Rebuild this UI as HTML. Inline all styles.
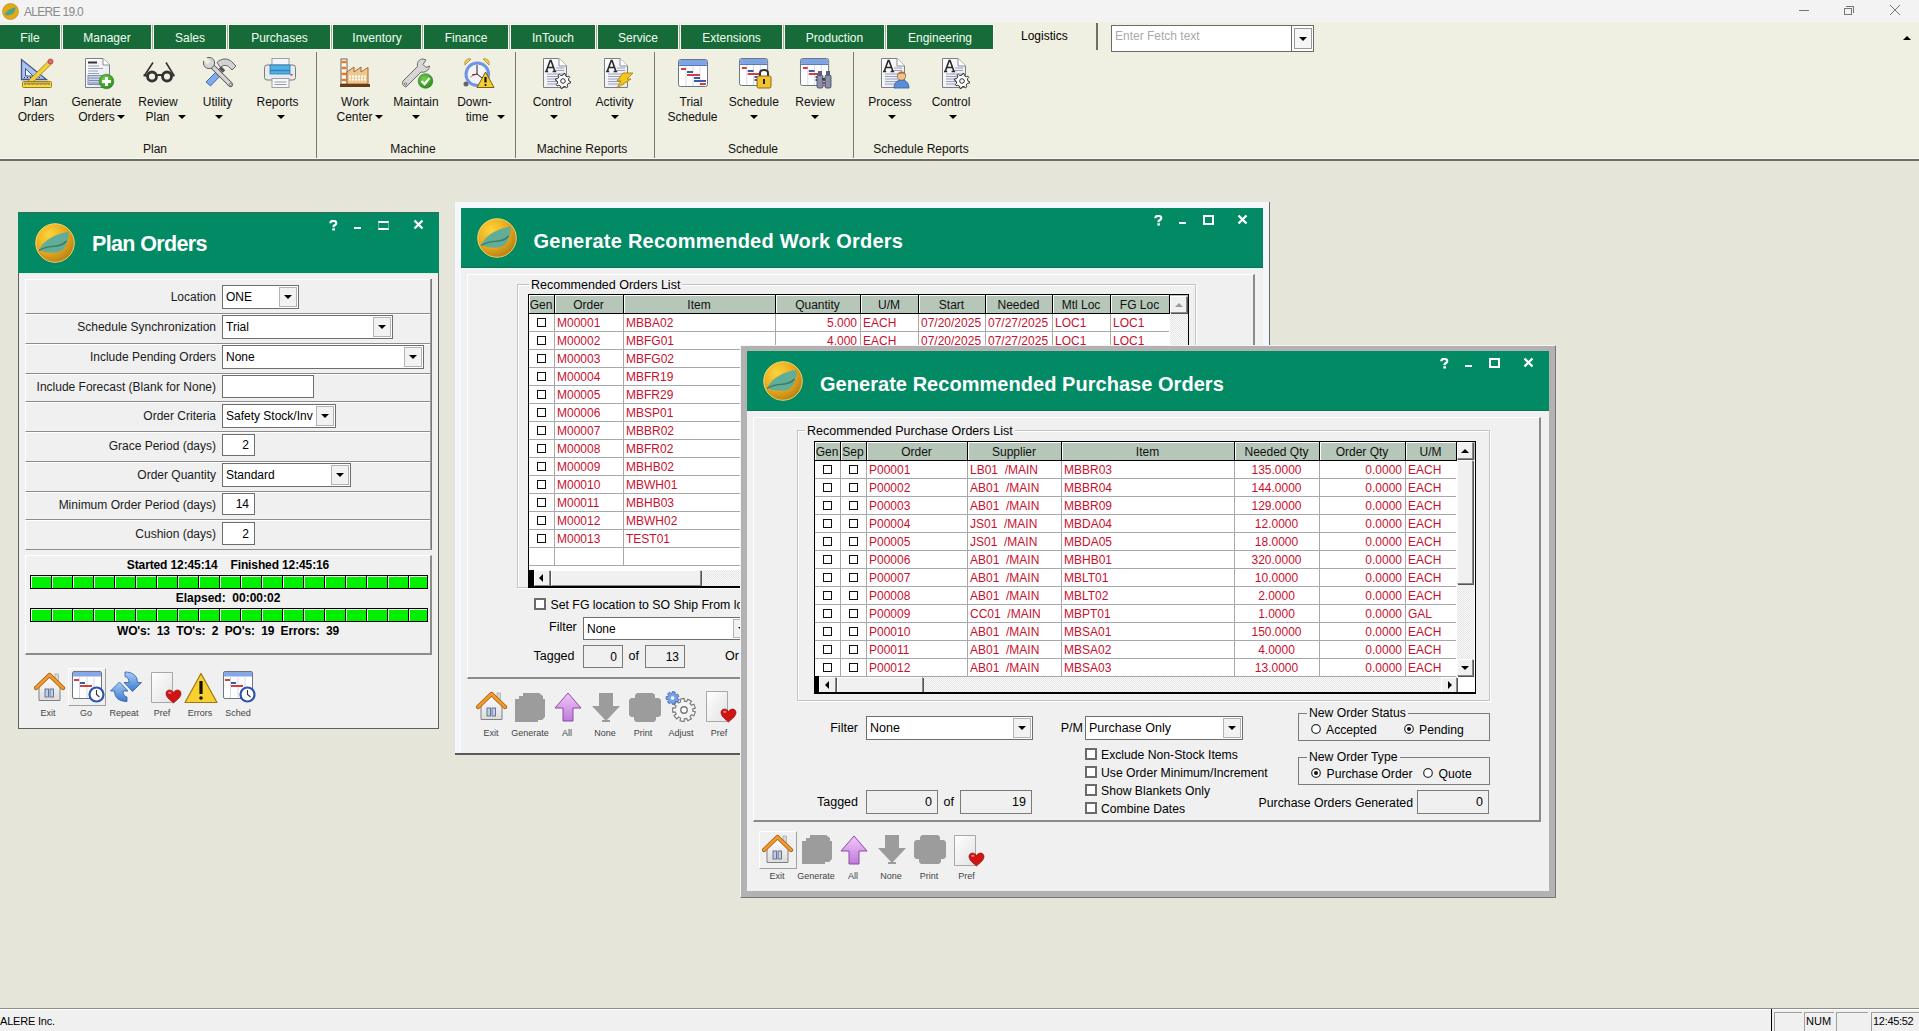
<!DOCTYPE html>
<html><head><meta charset="utf-8">
<style>
*{box-sizing:border-box}
html,body{margin:0;padding:0}
body{width:1919px;height:1031px;overflow:hidden;position:relative;background:#e6e5d9;font-family:"Liberation Sans",sans-serif;font-size:12px;color:#000}
.a{position:absolute}
.t{position:absolute;white-space:nowrap;line-height:14px}
.tab{position:absolute;top:25px;height:24px;background:#176b39;color:#eefff0;text-align:center;line-height:26px;font-size:12px;outline:1px solid #fafaf5}
.rl{position:absolute;text-align:center;white-space:nowrap;font-size:12px;line-height:15px;color:#111}
.sep{position:absolute;top:52px;width:1px;height:106px;background:#7a7a72}
.dd{display:inline-block;width:0;height:0;border-left:4px solid transparent;border-right:4px solid transparent;border-top:4px solid #000;vertical-align:middle}
</style></head><body>
<!-- title bar -->
<div class="a" style="left:0;top:0;width:1919px;height:22px;background:#f3f3f3"></div>
<svg class="a" style="left:2px;top:3px" width="17" height="17" viewBox="-8.5 -8.5 17 17"><circle r="8" fill="#e2a918" stroke="#b88a10" stroke-width="0.6"/><path d="M-6 3C-3 -2 2 -4 5 -4C5 0 2 4 -3 4Z" fill="#4fa48a"/></svg>
<div class="t" style="left:24px;top:5px;color:#8a8a8a;font-size:12px;letter-spacing:-0.7px">ALERE 19.0</div>
<div class="a" style="left:1799px;top:10px;width:10px;height:1px;background:#777"></div>
<div class="a" style="left:1844px;top:8px;width:8px;height:7px;border:1px solid #777"></div>
<div class="a" style="left:1846px;top:6px;width:8px;height:7px;border-top:1px solid #777;border-right:1px solid #777"></div>
<svg class="a" style="left:1889px;top:4px" width="12" height="12"><path d="M1 1L11 11M11 1L1 11" stroke="#777" stroke-width="1"/></svg>

<!-- ribbon bg -->
<div class="a" style="left:0;top:22px;width:1919px;height:136px;background:#efefe2"></div>
<div class="a" style="left:0;top:158px;width:1919px;height:1px;background:#fafaf6"></div>
<div class="a" style="left:0;top:159px;width:1919px;height:2px;background:#6d6d65"></div>

<!-- menu tabs -->
<div class="tab" style="left:0;width:60px">File</div>
<div class="tab" style="left:63px;width:88px">Manager</div>
<div class="tab" style="left:154px;width:72px">Sales</div>
<div class="tab" style="left:229px;width:101px">Purchases</div>
<div class="tab" style="left:333px;width:88px">Inventory</div>
<div class="tab" style="left:424px;width:84px">Finance</div>
<div class="tab" style="left:511px;width:84px">InTouch</div>
<div class="tab" style="left:598px;width:80px">Service</div>
<div class="tab" style="left:681px;width:101px">Extensions</div>
<div class="tab" style="left:785px;width:99px">Production</div>
<div class="tab" style="left:887px;width:106px">Engineering</div>
<div class="a" style="left:61px;top:25px;width:1px;height:24px;background:#a9a9a0"></div><div class="a" style="left:152px;top:25px;width:1px;height:24px;background:#a9a9a0"></div><div class="a" style="left:227px;top:25px;width:1px;height:24px;background:#a9a9a0"></div><div class="a" style="left:331px;top:25px;width:1px;height:24px;background:#a9a9a0"></div><div class="a" style="left:422px;top:25px;width:1px;height:24px;background:#a9a9a0"></div><div class="a" style="left:509px;top:25px;width:1px;height:24px;background:#a9a9a0"></div><div class="a" style="left:596px;top:25px;width:1px;height:24px;background:#a9a9a0"></div><div class="a" style="left:679px;top:25px;width:1px;height:24px;background:#a9a9a0"></div><div class="a" style="left:783px;top:25px;width:1px;height:24px;background:#a9a9a0"></div><div class="a" style="left:885px;top:25px;width:1px;height:24px;background:#a9a9a0"></div>
<div class="t" style="left:1021px;top:29px;font-size:12px">Logistics</div>
<div class="a" style="left:1096px;top:23px;width:2px;height:27px;background:#6f6f68"></div>
<div class="a" style="left:1111px;top:25px;width:203px;height:27px;background:#fff;border:1px solid #6a6a6a"></div>
<div class="t" style="left:1115px;top:29px;color:#aaa">Enter Fetch text</div>
<div class="a" style="left:1291px;top:26px;width:22px;height:25px;border-left:1px solid #6a6a6a;background:#fff"></div>
<div class="a" style="left:1294px;top:28px;width:18px;height:21px;border:1px solid #999;background:#f6f6f6"></div>
<div class="a" style="left:1299px;top:37px;width:0;height:0;border-left:4px solid transparent;border-right:4px solid transparent;border-top:4px solid #000"></div>
<div class="a" style="left:1903px;top:36px;width:0;height:0;border-left:4px solid transparent;border-right:4px solid transparent;border-bottom:4px solid #000"></div>

<!-- ribbon separators -->
<div class="sep" style="left:316px"></div>
<div class="sep" style="left:515px"></div>
<div class="sep" style="left:654px"></div>
<div class="sep" style="left:853px"></div>

<svg class="a" style="left:0;top:0" width="1000" height="100" viewBox="0 0 1000 100">
<defs>
<linearGradient id="gdoc" x1="0" y1="0" x2="1" y2="1"><stop offset="0" stop-color="#ffffff"/><stop offset="1" stop-color="#e4e6ee"/></linearGradient>
<linearGradient id="ggold" x1="0" y1="0" x2="0" y2="1"><stop offset="0" stop-color="#ffe680"/><stop offset="1" stop-color="#e0a800"/></linearGradient>
<radialGradient id="ggreen" cx="0.4" cy="0.35" r="0.7"><stop offset="0" stop-color="#6fd34a"/><stop offset="1" stop-color="#2a8a1a"/></radialGradient>



</defs>
<!-- Plan Orders -->
<g transform="translate(20,58)">
<path d="M1.5 1.5V21.5H26.5Z" fill="#a9c4ee" stroke="#46568a" stroke-width="1.3"/>
<path d="M5.5 10.5V18H13Z" fill="#eef3fc" stroke="#46568a" stroke-width="1"/>
<path d="M4 19.5H22" stroke="#2c3c78" stroke-width="1.2" stroke-dasharray="1 2"/>
<path d="M8 23L29 2.5L32 5.5L11 26Z" fill="#f1cf3c" stroke="#9e7e10" stroke-width="0.8"/>
<circle cx="30.5" cy="3.5" r="2.6" fill="#e06a6a" stroke="#a03030" stroke-width="0.6"/>
<path d="M8 23L6.5 27.5L11 26Z" fill="#6a4a2a"/>
<rect x="2.5" y="23.5" width="29" height="6" rx="1" fill="#f6d84a" stroke="#a58010" stroke-width="1"/>
<path d="M5 24.5V27M7 24.5V26.5M9 24.5V27M11 24.5V26.5M13 24.5V27M15 24.5V26.5M17 24.5V27M19 24.5V26.5M21 24.5V27M23 24.5V26.5M25 24.5V27M27 24.5V26.5M29 24.5V27" stroke="#333" stroke-width="0.8"/>
</g>
<!-- Generate Orders -->
<g transform="translate(85,58)">
<path d="M0.5 0.5H18L24.5 7V29.5H0.5Z" fill="url(#gdoc)" stroke="#7c7f88"/>
<path d="M18 0.5V7H24.5" fill="#fff" stroke="#8a8d96"/>
<path d="M3 4.5H12" stroke="#333" stroke-width="2"/>
<path d="M3 8H14M3 10.5H18M3 13H13M3 15.5H14" stroke="#9aa0b8"/>
<rect x="3" y="17.5" width="16" height="9" fill="#cdd6ea" stroke="#6a78a0" stroke-width="0.8"/>
<path d="M4 20H18M4 22.5H18M4 25H18" stroke="#6a78a0" stroke-width="0.8"/>
<circle cx="21.5" cy="23.5" r="7.3" fill="url(#ggreen)" stroke="#2a7a1e" stroke-width="0.6"/>
<path d="M21.5 19V28M17 23.5H26" stroke="#fff" stroke-width="3"/>
</g>
<!-- Review Plan glasses -->
<g transform="translate(143,58)" fill="none" stroke="#333">
<path d="M1.5 17.5L10 4.5M31 17.5L23 4.5" stroke-width="1.6"/>
<circle cx="9" cy="18.5" r="4.5" stroke-width="2.8"/>
<circle cx="24" cy="18.5" r="4.5" stroke-width="2.8"/>
<path d="M13 17H20M0.5 17.5H4.5M28.5 17.5H31.5" stroke-width="2"/>
</g>
<!-- Utility -->
<g transform="translate(203,57)">
<path d="M15.5 12.5L19.5 16.5L7.5 29L3 25Z" fill="#7eaaf0" stroke="#3e5e9c" stroke-width="0.9"/>
<path d="M14 5.5C18 1.5 24 0.5 28.5 4.5L33 9L29 13L25.5 9.5C22.5 7.5 19.5 8.5 17.5 10.5Z" fill="#d2d2d2" stroke="#555" stroke-width="0.9"/>
<path d="M17 10.5L21 14.5" stroke="#555" stroke-width="3.5"/>
<path d="M8 8L27.5 27.5" stroke="#555" stroke-width="5.2" stroke-linecap="round"/>
<path d="M8 8L27.5 27.5" stroke="#d6d6d6" stroke-width="3.4" stroke-linecap="round"/>
<circle cx="6" cy="6" r="5.6" fill="#d6d6d6" stroke="#555" stroke-width="0.9"/>
<path d="M-0.5 2.5L4.5 7.5L7.5 4.5L2.5 -0.5Z" fill="#efefe2"/>
<circle cx="27.5" cy="27.5" r="1.2" fill="none" stroke="#666" stroke-width="0.7"/>
</g>
<!-- Reports printer -->
<g transform="translate(264,58)">
<rect x="8" y="0.5" width="17" height="8" fill="#f4f6fa" stroke="#9aa0aa"/>
<rect x="0.5" y="7" width="31" height="15" rx="2.5" fill="#e8eaee" stroke="#777c84"/>
<rect x="6" y="7" width="20" height="9" fill="#52b0e4" stroke="#2a7cb0" stroke-width="0.8"/>
<path d="M6 12.5H26" stroke="#2a86c0" stroke-width="1.5"/>
<rect x="8" y="20.5" width="17" height="9" fill="#f8f8f8" stroke="#9aa0aa"/>
<path d="M10.5 24H22.5M10.5 26.5H22.5" stroke="#99a"/>
<rect x="26.5" y="16" width="2" height="1.5" fill="#a33"/>
</g>
<!-- Work Center factory -->
<g transform="translate(340,58)">
<rect x="1" y="1" width="6" height="25" fill="#fff" stroke="#444" stroke-width="0.8"/>
<path d="M1.5 4H6.5M1.5 10H6.5M1.5 16H6.5M1.5 22H6.5" stroke="#f07a1a" stroke-width="2.4"/>
<path d="M7 26V14L14 9V14L21 9V14L28 9.5V26Z" fill="#ebc88e" stroke="#a05a2a" stroke-width="0.9"/>
<path d="M9 18.5H27M9 21.5H27" stroke="#fff" stroke-width="2.2" stroke-dasharray="2 1"/>
<rect x="0" y="26" width="30" height="3" fill="#6a3a12"/>
</g>
<!-- Maintain -->
<g transform="translate(401,58)">
<path d="M22 1C18 1 15.5 4.5 16.5 8.5L2 23C0.5 25 2.5 29 5 29L20 14C24 15 28.5 12 28.5 8L25 9.5L22 6.5L25 2Z" fill="#d6d6d6" stroke="#6a6a6a" stroke-width="1"/>
<circle cx="4.5" cy="26" r="1.2" fill="none" stroke="#666" stroke-width="0.7"/>
<circle cx="24.5" cy="23" r="7.3" fill="url(#ggreen)" stroke="#2a7a1e" stroke-width="0.6"/>
<path d="M20.5 23L23.5 26L28.5 20" fill="none" stroke="#fff" stroke-width="2.4"/>
</g>
<!-- Downtime clock -->
<g transform="translate(462,57)">
<path d="M3 8C2 4 5 1 9 2Z" fill="#f0d060" stroke="#a88a20" stroke-width="0.8"/>
<path d="M27 8C28 4 25 1 21 2Z" fill="#f0d060" stroke="#a88a20" stroke-width="0.8"/>
<circle cx="4" cy="27" r="2.5" fill="#666"/>
<circle cx="15.3" cy="17.2" r="11.3" fill="#f4f4f8" stroke="#6e94e4" stroke-width="3"/>
<path d="M15 8V17L20 21M15 17L10 18" stroke="#222" stroke-width="1" fill="none"/>
<path d="M15 17L8 20" stroke="#d33" stroke-width="0.6"/>
<path d="M23.5 15L32 30.5H15Z" fill="#f5cf30" stroke="#7a6010" stroke-width="1"/>
<path d="M23.5 20V25.5" stroke="#111" stroke-width="2.2"/>
<circle cx="23.5" cy="28" r="1.1" fill="#111"/>
</g>
<!-- Machine Reports Control -->
<g transform="translate(543,58)">
<path d="M0.5 0.5H16L23.5 8V29.5H0.5Z" fill="url(#gdoc)" stroke="#7c7f88" stroke-width="1"/>
<path d="M16 0.5V8H23.5" fill="#fff" stroke="#8a8d96" stroke-width="1"/>
<path d="M2 13.5H5.2M9.6 13.5H13.2M3.2 13.5L7.2 2.5H8L12 13.5M5.2 9.5H10" fill="none" stroke="#2a2a2a" stroke-width="1.6"/>
<path d="M13 10H21M13 12.5H21M4 16H20M4 18.5H20M4 21H20M4 23.5H20M4 26H20" stroke="#9aa0b8" stroke-width="1"/>
</g>
<g transform="translate(563,81)"><path d="M5.90 0.00 L7.57 0.72 L7.26 2.23 L5.45 2.26 L4.17 4.17 L4.84 5.86 L3.56 6.72 L2.26 5.45 L0.00 5.90 L-0.72 7.57 L-2.23 7.26 L-2.26 5.45 L-4.17 4.17 L-5.86 4.84 L-6.72 3.56 L-5.45 2.26 L-5.90 0.00 L-7.57 -0.72 L-7.26 -2.23 L-5.45 -2.26 L-4.17 -4.17 L-4.84 -5.86 L-3.56 -6.72 L-2.26 -5.45 L-0.00 -5.90 L0.72 -7.57 L2.23 -7.26 L2.26 -5.45 L4.17 -4.17 L5.86 -4.84 L6.72 -3.56 L5.45 -2.26Z" fill="#fff" stroke="#2e2e2e" stroke-width="1"/><circle r="2.3" fill="#fff" stroke="#2e2e2e" stroke-width="1"/></g>
<!-- Activity -->
<g transform="translate(604,58)">
<path d="M0.5 0.5H16L23.5 8V29.5H0.5Z" fill="url(#gdoc)" stroke="#7c7f88" stroke-width="1"/>
<path d="M16 0.5V8H23.5" fill="#fff" stroke="#8a8d96" stroke-width="1"/>
<path d="M2 13.5H5.2M9.6 13.5H13.2M3.2 13.5L7.2 2.5H8L12 13.5M5.2 9.5H10" fill="none" stroke="#2a2a2a" stroke-width="1.6"/>
<path d="M13 10H21M13 12.5H21M4 16H20M4 18.5H20M4 21H20M4 23.5H20M4 26H20" stroke="#9aa0b8" stroke-width="1"/>
</g>
<path d="M623 73L633 73L627 79L631 79L617 88L621 81L617 81Z" fill="#f6c61a" stroke="#9c7a08" stroke-width="0.8"/>
<!-- Trial Schedule -->
<g transform="translate(678,59)">
<rect x="0.5" y="0.5" width="29" height="27" rx="2" fill="#fff" stroke="#6e7480" stroke-width="1"/>
<rect x="1" y="1" width="28" height="5" rx="1.5" fill="#7ea4e4"/>
<path d="M1 6.5H29" stroke="#5577bb"/>
<path d="M8 7V27M15 7V27M22 7V27" stroke="#d8dbe4" stroke-width="1"/>
<rect x="3" y="9" width="5" height="2" fill="#d04040"/>
<rect x="9" y="12" width="6" height="2" fill="#3d5aa8"/>
<rect x="9" y="15" width="13" height="2" fill="#d04040"/>
<rect x="16" y="18" width="6" height="2" fill="#3d5aa8"/>
<rect x="16" y="21" width="12" height="2" fill="#3d5aa8"/>
<rect x="22" y="24" width="6" height="2" fill="#d04040"/>
</g>
<!-- Schedule lock -->
<g transform="translate(739,58) scale(0.97,1)">
<rect x="0.5" y="0.5" width="29" height="27" rx="2" fill="#fff" stroke="#6e7480" stroke-width="1"/>
<rect x="1" y="1" width="28" height="5" rx="1.5" fill="#7ea4e4"/>
<path d="M1 6.5H29" stroke="#5577bb"/>
<path d="M8 7V27M15 7V27M22 7V27" stroke="#d8dbe4" stroke-width="1"/>
<rect x="3" y="9" width="5" height="2" fill="#d04040"/>
<rect x="9" y="12" width="6" height="2" fill="#3d5aa8"/>
<rect x="9" y="15" width="13" height="2" fill="#d04040"/>
<rect x="16" y="18" width="6" height="2" fill="#3d5aa8"/>
<rect x="16" y="21" width="12" height="2" fill="#3d5aa8"/>
<rect x="22" y="24" width="6" height="2" fill="#d04040"/>
</g>
<path d="M760 76V73C760 69 768 69 768 73V76" fill="none" stroke="#333" stroke-width="2"/>
<rect x="757" y="76" width="14" height="12" rx="1.5" fill="#f2c230" stroke="#8a6a10"/>
<rect x="763" y="79" width="2" height="5" fill="#222"/>
<!-- Review binoculars -->
<g transform="translate(800,58) scale(0.97,1)">
<rect x="0.5" y="0.5" width="29" height="27" rx="2" fill="#fff" stroke="#6e7480" stroke-width="1"/>
<rect x="1" y="1" width="28" height="5" rx="1.5" fill="#7ea4e4"/>
<path d="M1 6.5H29" stroke="#5577bb"/>
<path d="M8 7V27M15 7V27M22 7V27" stroke="#d8dbe4" stroke-width="1"/>
<rect x="3" y="9" width="5" height="2" fill="#d04040"/>
<rect x="9" y="12" width="6" height="2" fill="#3d5aa8"/>
<rect x="9" y="15" width="13" height="2" fill="#d04040"/>
<rect x="16" y="18" width="6" height="2" fill="#3d5aa8"/>
<rect x="16" y="21" width="12" height="2" fill="#3d5aa8"/>
<rect x="22" y="24" width="6" height="2" fill="#d04040"/>
</g>
<rect x="817" y="75" width="6" height="13" rx="1.5" fill="#8a90a8" stroke="#3a3e50" stroke-width="0.8"/>
<rect x="825" y="75" width="6" height="13" rx="1.5" fill="#8a90a8" stroke="#3a3e50" stroke-width="0.8"/>
<rect x="818" y="71" width="4" height="5" fill="#5a6078"/>
<rect x="826" y="71" width="4" height="5" fill="#5a6078"/>
<path d="M822 79H825" stroke="#3a3e50" stroke-width="2"/>
<!-- Process -->
<g transform="translate(881,58)">
<path d="M0.5 0.5H16L23.5 8V29.5H0.5Z" fill="url(#gdoc)" stroke="#7c7f88" stroke-width="1"/>
<path d="M16 0.5V8H23.5" fill="#fff" stroke="#8a8d96" stroke-width="1"/>
<path d="M2 13.5H5.2M9.6 13.5H13.2M3.2 13.5L7.2 2.5H8L12 13.5M5.2 9.5H10" fill="none" stroke="#2a2a2a" stroke-width="1.6"/>
<path d="M13 10H21M13 12.5H21M4 16H20M4 18.5H20M4 21H20M4 23.5H20M4 26H20" stroke="#9aa0b8" stroke-width="1"/>
</g>
<path d="M894 88C894 82 898 80 901.5 80C905 80 909 82 909 88Z" fill="#5a8ed8" stroke="#2e5aa0" stroke-width="0.8"/>
<circle cx="901.5" cy="76" r="4.2" fill="#f0c48e" stroke="#8a5a2a" stroke-width="0.7"/>
<path d="M897.5 75C897.5 71 905.5 71 905.5 75C904 73 899 73 897.5 75Z" fill="#a86428"/>
<!-- Schedule Reports Control -->
<g transform="translate(942,58)">
<path d="M0.5 0.5H16L23.5 8V29.5H0.5Z" fill="url(#gdoc)" stroke="#7c7f88" stroke-width="1"/>
<path d="M16 0.5V8H23.5" fill="#fff" stroke="#8a8d96" stroke-width="1"/>
<path d="M2 13.5H5.2M9.6 13.5H13.2M3.2 13.5L7.2 2.5H8L12 13.5M5.2 9.5H10" fill="none" stroke="#2a2a2a" stroke-width="1.6"/>
<path d="M13 10H21M13 12.5H21M4 16H20M4 18.5H20M4 21H20M4 23.5H20M4 26H20" stroke="#9aa0b8" stroke-width="1"/>
</g>
<g transform="translate(962,81)"><path d="M5.90 0.00 L7.57 0.72 L7.26 2.23 L5.45 2.26 L4.17 4.17 L4.84 5.86 L3.56 6.72 L2.26 5.45 L0.00 5.90 L-0.72 7.57 L-2.23 7.26 L-2.26 5.45 L-4.17 4.17 L-5.86 4.84 L-6.72 3.56 L-5.45 2.26 L-5.90 0.00 L-7.57 -0.72 L-7.26 -2.23 L-5.45 -2.26 L-4.17 -4.17 L-4.84 -5.86 L-3.56 -6.72 L-2.26 -5.45 L-0.00 -5.90 L0.72 -7.57 L2.23 -7.26 L2.26 -5.45 L4.17 -4.17 L5.86 -4.84 L6.72 -3.56 L5.45 -2.26Z" fill="#fff" stroke="#2e2e2e" stroke-width="1"/><circle r="2.3" fill="#fff" stroke="#2e2e2e" stroke-width="1"/></g>
</svg>


<!-- ribbon labels -->
<div class="rl" style="left:-14.5px;top:95px;width:100px">Plan</div>
<div class="rl" style="left:-14px;top:110px;width:100px">Orders</div>
<div class="rl" style="left:46.5px;top:95px;width:100px">Generate</div>
<div class="rl" style="left:46.5px;top:110px;width:100px">Orders</div>
<div class="a" style="left:117px;top:115px;width:0;height:0;border-left:4px solid transparent;border-right:4px solid transparent;border-top:4px solid #000"></div>
<div class="rl" style="left:108px;top:95px;width:100px">Review</div>
<div class="rl" style="left:107.5px;top:110px;width:100px">Plan</div>
<div class="a" style="left:178px;top:115px;width:0;height:0;border-left:4px solid transparent;border-right:4px solid transparent;border-top:4px solid #000"></div>
<div class="rl" style="left:167.5px;top:95px;width:100px">Utility</div>
<div class="a" style="left:215px;top:115px;width:0;height:0;border-left:4px solid transparent;border-right:4px solid transparent;border-top:4px solid #000"></div>
<div class="rl" style="left:227.5px;top:95px;width:100px">Reports</div>
<div class="a" style="left:276.5px;top:115px;width:0;height:0;border-left:4px solid transparent;border-right:4px solid transparent;border-top:4px solid #000"></div>
<div class="rl" style="left:305px;top:95px;width:100px">Work</div>
<div class="rl" style="left:304.5px;top:110px;width:100px">Center</div>
<div class="a" style="left:375px;top:115px;width:0;height:0;border-left:4px solid transparent;border-right:4px solid transparent;border-top:4px solid #000"></div>
<div class="rl" style="left:366px;top:95px;width:100px">Maintain</div>
<div class="a" style="left:412px;top:115px;width:0;height:0;border-left:4px solid transparent;border-right:4px solid transparent;border-top:4px solid #000"></div>
<div class="rl" style="left:424.5px;top:95px;width:100px">Down-</div>
<div class="rl" style="left:427px;top:110px;width:100px">time</div>
<div class="a" style="left:497px;top:115px;width:0;height:0;border-left:4px solid transparent;border-right:4px solid transparent;border-top:4px solid #000"></div>
<div class="rl" style="left:502px;top:95px;width:100px">Control</div>
<div class="a" style="left:550px;top:115px;width:0;height:0;border-left:4px solid transparent;border-right:4px solid transparent;border-top:4px solid #000"></div>
<div class="rl" style="left:564.5px;top:95px;width:100px">Activity</div>
<div class="a" style="left:611px;top:115px;width:0;height:0;border-left:4px solid transparent;border-right:4px solid transparent;border-top:4px solid #000"></div>
<div class="rl" style="left:641px;top:95px;width:100px">Trial</div>
<div class="rl" style="left:642.5px;top:110px;width:100px">Schedule</div>
<div class="rl" style="left:703.8px;top:95px;width:100px">Schedule</div>
<div class="a" style="left:750px;top:115px;width:0;height:0;border-left:4px solid transparent;border-right:4px solid transparent;border-top:4px solid #000"></div>
<div class="rl" style="left:765px;top:95px;width:100px">Review</div>
<div class="a" style="left:811px;top:115px;width:0;height:0;border-left:4px solid transparent;border-right:4px solid transparent;border-top:4px solid #000"></div>
<div class="rl" style="left:840px;top:95px;width:100px">Process</div>
<div class="a" style="left:888px;top:115px;width:0;height:0;border-left:4px solid transparent;border-right:4px solid transparent;border-top:4px solid #000"></div>
<div class="rl" style="left:901px;top:95px;width:100px">Control</div>
<div class="a" style="left:949px;top:115px;width:0;height:0;border-left:4px solid transparent;border-right:4px solid transparent;border-top:4px solid #000"></div>
<div class="rl" style="left:95px;top:142px;width:120px">Plan</div>
<div class="rl" style="left:353px;top:142px;width:120px">Machine</div>
<div class="rl" style="left:522px;top:142px;width:120px">Machine Reports</div>
<div class="rl" style="left:693px;top:142px;width:120px">Schedule</div>
<div class="rl" style="left:861px;top:142px;width:120px">Schedule Reports</div>

<!-- status bar -->
<div class="a" style="left:0;top:1008px;width:1919px;height:1px;background:#8e8e86"></div>
<div class="a" style="left:0;top:1009px;width:1919px;height:22px;background:#f0f0f0;border-top:1px solid #fff"></div>
<div class="t" style="left:0;top:1014px;font-size:11px;letter-spacing:-0.2px">ALERE Inc.</div>
<div class="a" style="left:1771px;top:1009px;width:1px;height:22px;background:#000"></div>
<div class="a" style="left:1774px;top:1012px;width:28px;height:19px;border-top:1px solid #a0a0a0;border-left:1px solid #a0a0a0"></div>
<div class="a" style="left:1804px;top:1012px;width:30px;height:19px;border-top:1px solid #a0a0a0;border-left:1px solid #a0a0a0"></div>
<div class="t" style="left:1806px;top:1014px;font-size:11px">NUM</div>
<div class="a" style="left:1836px;top:1012px;width:32px;height:19px;border-top:1px solid #a0a0a0;border-left:1px solid #a0a0a0"></div>
<div class="a" style="left:1871px;top:1012px;width:48px;height:19px;border-top:1px solid #a0a0a0;border-left:1px solid #a0a0a0"></div>
<div class="t" style="left:1873px;top:1014px;font-size:11px;letter-spacing:-0.3px">12:45:52</div>

<div class="a" style="left:18px;top:212px;width:421px;height:517px;background:#f0f0f0;border:1px solid #5e625e;border-top:none"></div>
<div class="a" style="left:18px;top:212px;width:421px;height:61px;background:#028a64;border-top:1px solid #3a6a55"></div>
<div class="a" style="left:19px;top:273px;width:419px;height:1px;background:#d8f4ea"></div>
<svg class="a" style="left:33.5px;top:221.5px" width="42" height="42" viewBox="-21 -21 42 42"><defs><radialGradient id="lg" cx="0.35" cy="0.3" r="0.8"><stop offset="0" stop-color="#ffd53a"/><stop offset="0.55" stop-color="#e7a91e"/><stop offset="1" stop-color="#b07812"/></radialGradient></defs><circle r="20" fill="#0a5a40" opacity="0.5"/><circle r="19.3" fill="url(#lg)" stroke="#f6e27a" stroke-width="0.9"/><path d="M-16 7C-10 -4 0 -9 13.6 -11.3C14 -2 10 9 1 9.5C-6 10 -12 9 -16 7Z" fill="#62ad97"/><path d="M-16 7.5C-9 2.5 -2 4 4 2.5C8 1.5 10 0 11.5 -2" fill="none" stroke="#3f7a62" stroke-width="1.4"/></svg>
<div class="a" style="left:92px;top:234.30px;font-size:21.5px;line-height:21.5px;white-space:nowrap;font-weight:bold;color:#fff;letter-spacing:-0.65px">Plan Orders</div>
<svg class="a" style="left:329px;top:220px" width="9" height="11"><path d="M1.3 3.3C1.3 1.4 2.5 0.9 4.2 0.9C6 0.9 7.3 1.8 7.3 3.2C7.3 4.8 5.3 5.2 4.6 6.1V7.2" fill="none" stroke="#fff" stroke-width="2.2"/><rect x="3.3" y="8.3" width="2.7" height="2.2" fill="#fff"/></svg>
<div class="a" style="left:354px;top:227px;width:7px;height:2px;background:#fff"></div>
<div class="a" style="left:378px;top:221px;width:11px;height:9px;border-left:1px solid #8aa89a;border-right:1px solid #8aa89a;border-top:2px solid #fff;border-bottom:2px solid #fff"></div>
<svg class="a" style="left:413px;top:219px" width="11" height="11"><path d="M1.5 1.5L9.5 9.5M9.5 1.5L1.5 9.5" stroke="#fff" stroke-width="2.3"/></svg>
<div class="a" style="left:25px;top:279px;width:406px;height:35px;border-top:1px solid #fff;border-left:1px solid #fff;border-bottom:1px solid #8c8c8c"></div>
<div class="a" style="left:25px;top:314px;width:406px;height:30px;border-top:1px solid #fff;border-left:1px solid #fff;border-bottom:1px solid #8c8c8c"></div>
<div class="a" style="left:25px;top:344px;width:406px;height:30px;border-top:1px solid #fff;border-left:1px solid #fff;border-bottom:1px solid #8c8c8c"></div>
<div class="a" style="left:25px;top:374px;width:406px;height:28px;border-top:1px solid #fff;border-left:1px solid #fff;border-bottom:1px solid #8c8c8c"></div>
<div class="a" style="left:25px;top:402px;width:406px;height:30px;border-top:1px solid #fff;border-left:1px solid #fff;border-bottom:1px solid #8c8c8c"></div>
<div class="a" style="left:25px;top:432px;width:406px;height:30px;border-top:1px solid #fff;border-left:1px solid #fff;border-bottom:1px solid #8c8c8c"></div>
<div class="a" style="left:25px;top:462px;width:406px;height:30px;border-top:1px solid #fff;border-left:1px solid #fff;border-bottom:1px solid #8c8c8c"></div>
<div class="a" style="left:25px;top:492px;width:406px;height:28px;border-top:1px solid #fff;border-left:1px solid #fff;border-bottom:1px solid #8c8c8c"></div>
<div class="a" style="left:25px;top:520px;width:406px;height:30px;border-top:1px solid #fff;border-left:1px solid #fff;border-bottom:1px solid #8c8c8c"></div>
<div class="a" style="left:430px;top:279px;width:2px;height:271px;background:#a0a0a0;border-right:1px solid #777"></div>
<div class="a" style="right:1703px;top:290.84px;font-size:12px;line-height:12px;white-space:nowrap;color:#1a1a1a">Location</div>
<div class="a" style="right:1703px;top:320.84px;font-size:12px;line-height:12px;white-space:nowrap;color:#1a1a1a">Schedule Synchronization</div>
<div class="a" style="right:1703px;top:350.84px;font-size:12px;line-height:12px;white-space:nowrap;color:#1a1a1a">Include Pending Orders</div>
<div class="a" style="right:1703px;top:380.84px;font-size:12px;line-height:12px;white-space:nowrap;color:#1a1a1a">Include Forecast (Blank for None)</div>
<div class="a" style="right:1703px;top:410.34px;font-size:12px;line-height:12px;white-space:nowrap;color:#1a1a1a">Order Criteria</div>
<div class="a" style="right:1703px;top:439.84px;font-size:12px;line-height:12px;white-space:nowrap;color:#1a1a1a">Grace Period (days)</div>
<div class="a" style="right:1703px;top:469.34px;font-size:12px;line-height:12px;white-space:nowrap;color:#1a1a1a">Order Quantity</div>
<div class="a" style="right:1703px;top:498.84px;font-size:12px;line-height:12px;white-space:nowrap;color:#1a1a1a">Minimum Order Period (days)</div>
<div class="a" style="right:1703px;top:527.84px;font-size:12px;line-height:12px;white-space:nowrap;color:#1a1a1a">Cushion (days)</div>
<div class="a" style="left:222px;top:285px;width:77px;height:24px;background:#fff;border:1px solid #6e6e6e"></div>
<div class="a" style="left:279px;top:287px;width:18px;height:20px;background:#f2f2f2;border:1px solid #b4b4b4"></div>
<div class="a" style="left:284.0px;top:295.0px;width:0;height:0;border-left:4px solid transparent;border-right:4px solid transparent;border-top:4px solid #000"></div>
<div class="a" style="left:226px;top:291.14px;font-size:12px;line-height:12px;white-space:nowrap;">ONE</div>
<div class="a" style="left:222px;top:315px;width:171px;height:24px;background:#fff;border:1px solid #6e6e6e"></div>
<div class="a" style="left:373px;top:317px;width:18px;height:20px;background:#f2f2f2;border:1px solid #b4b4b4"></div>
<div class="a" style="left:378.0px;top:325.0px;width:0;height:0;border-left:4px solid transparent;border-right:4px solid transparent;border-top:4px solid #000"></div>
<div class="a" style="left:226px;top:321.14px;font-size:12px;line-height:12px;white-space:nowrap;">Trial</div>
<div class="a" style="left:222px;top:345px;width:202px;height:24px;background:#fff;border:1px solid #6e6e6e"></div>
<div class="a" style="left:404px;top:347px;width:18px;height:20px;background:#f2f2f2;border:1px solid #b4b4b4"></div>
<div class="a" style="left:409.0px;top:355.0px;width:0;height:0;border-left:4px solid transparent;border-right:4px solid transparent;border-top:4px solid #000"></div>
<div class="a" style="left:226px;top:351.14px;font-size:12px;line-height:12px;white-space:nowrap;">None</div>
<div class="a" style="left:222px;top:375px;width:92px;height:23px;background:#fff;border:1px solid #6e6e6e"></div>
<div class="a" style="left:222px;top:404px;width:114px;height:24px;background:#fff;border:1px solid #6e6e6e"></div>
<div class="a" style="left:316px;top:406px;width:18px;height:20px;background:#f2f2f2;border:1px solid #b4b4b4"></div>
<div class="a" style="left:321.0px;top:414.0px;width:0;height:0;border-left:4px solid transparent;border-right:4px solid transparent;border-top:4px solid #000"></div>
<div class="a" style="left:226px;top:410.14px;font-size:12px;line-height:12px;white-space:nowrap;">Safety Stock/Inv</div>
<div class="a" style="left:222px;top:434px;width:33px;height:22px;background:#fff;border:1px solid #6e6e6e"></div>
<div class="a" style="left:222px;top:439.14px;width:27px;text-align:right;font-size:12px;line-height:12px;white-space:nowrap;">2</div>
<div class="a" style="left:222px;top:463px;width:129px;height:24px;background:#fff;border:1px solid #6e6e6e"></div>
<div class="a" style="left:331px;top:465px;width:18px;height:20px;background:#f2f2f2;border:1px solid #b4b4b4"></div>
<div class="a" style="left:336.0px;top:473.0px;width:0;height:0;border-left:4px solid transparent;border-right:4px solid transparent;border-top:4px solid #000"></div>
<div class="a" style="left:226px;top:469.14px;font-size:12px;line-height:12px;white-space:nowrap;">Standard</div>
<div class="a" style="left:222px;top:493px;width:33px;height:22px;background:#fff;border:1px solid #6e6e6e"></div>
<div class="a" style="left:222px;top:498.14px;width:27px;text-align:right;font-size:12px;line-height:12px;white-space:nowrap;">14</div>
<div class="a" style="left:222px;top:522px;width:33px;height:23px;background:#fff;border:1px solid #6e6e6e"></div>
<div class="a" style="left:222px;top:527.64px;width:27px;text-align:right;font-size:12px;line-height:12px;white-space:nowrap;">2</div>
<div class="a" style="left:25px;top:555px;width:407px;height:100px;border-top:1px solid #fff;border-left:1px solid #fff;border-bottom:2px solid #8c8c8c;border-right:2px solid #8c8c8c"></div>
<div class="a" style="left:25px;top:558.84px;width:406px;text-align:center;font-size:12px;line-height:12px;white-space:nowrap;font-weight:bold;letter-spacing:-0.12px">Started 12:45:14&nbsp;&nbsp;&nbsp; Finished 12:45:16</div>
<div class="a" style="left:30px;top:575px;width:398px;height:14px;background:#000"></div>
<div class="a" style="left:31px;top:576px;width:20px;height:12px;background:#00f000;border-left:1px solid #e8ffe8;border-top:1px solid #e8ffe8"></div>
<div class="a" style="left:52px;top:576px;width:20px;height:12px;background:#00f000;border-left:1px solid #e8ffe8;border-top:1px solid #e8ffe8"></div>
<div class="a" style="left:73px;top:576px;width:20px;height:12px;background:#00f000;border-left:1px solid #e8ffe8;border-top:1px solid #e8ffe8"></div>
<div class="a" style="left:94px;top:576px;width:20px;height:12px;background:#00f000;border-left:1px solid #e8ffe8;border-top:1px solid #e8ffe8"></div>
<div class="a" style="left:115px;top:576px;width:20px;height:12px;background:#00f000;border-left:1px solid #e8ffe8;border-top:1px solid #e8ffe8"></div>
<div class="a" style="left:136px;top:576px;width:20px;height:12px;background:#00f000;border-left:1px solid #e8ffe8;border-top:1px solid #e8ffe8"></div>
<div class="a" style="left:157px;top:576px;width:20px;height:12px;background:#00f000;border-left:1px solid #e8ffe8;border-top:1px solid #e8ffe8"></div>
<div class="a" style="left:178px;top:576px;width:20px;height:12px;background:#00f000;border-left:1px solid #e8ffe8;border-top:1px solid #e8ffe8"></div>
<div class="a" style="left:199px;top:576px;width:20px;height:12px;background:#00f000;border-left:1px solid #e8ffe8;border-top:1px solid #e8ffe8"></div>
<div class="a" style="left:220px;top:576px;width:20px;height:12px;background:#00f000;border-left:1px solid #e8ffe8;border-top:1px solid #e8ffe8"></div>
<div class="a" style="left:241px;top:576px;width:20px;height:12px;background:#00f000;border-left:1px solid #e8ffe8;border-top:1px solid #e8ffe8"></div>
<div class="a" style="left:262px;top:576px;width:20px;height:12px;background:#00f000;border-left:1px solid #e8ffe8;border-top:1px solid #e8ffe8"></div>
<div class="a" style="left:283px;top:576px;width:20px;height:12px;background:#00f000;border-left:1px solid #e8ffe8;border-top:1px solid #e8ffe8"></div>
<div class="a" style="left:304px;top:576px;width:20px;height:12px;background:#00f000;border-left:1px solid #e8ffe8;border-top:1px solid #e8ffe8"></div>
<div class="a" style="left:325px;top:576px;width:20px;height:12px;background:#00f000;border-left:1px solid #e8ffe8;border-top:1px solid #e8ffe8"></div>
<div class="a" style="left:346px;top:576px;width:20px;height:12px;background:#00f000;border-left:1px solid #e8ffe8;border-top:1px solid #e8ffe8"></div>
<div class="a" style="left:367px;top:576px;width:20px;height:12px;background:#00f000;border-left:1px solid #e8ffe8;border-top:1px solid #e8ffe8"></div>
<div class="a" style="left:388px;top:576px;width:20px;height:12px;background:#00f000;border-left:1px solid #e8ffe8;border-top:1px solid #e8ffe8"></div>
<div class="a" style="left:409px;top:576px;width:18px;height:12px;background:#00f000;border-left:1px solid #e8ffe8;border-top:1px solid #e8ffe8"></div>
<div class="a" style="left:30px;top:608px;width:398px;height:14px;background:#000"></div>
<div class="a" style="left:31px;top:609px;width:20px;height:12px;background:#00f000;border-left:1px solid #e8ffe8;border-top:1px solid #e8ffe8"></div>
<div class="a" style="left:52px;top:609px;width:20px;height:12px;background:#00f000;border-left:1px solid #e8ffe8;border-top:1px solid #e8ffe8"></div>
<div class="a" style="left:73px;top:609px;width:20px;height:12px;background:#00f000;border-left:1px solid #e8ffe8;border-top:1px solid #e8ffe8"></div>
<div class="a" style="left:94px;top:609px;width:20px;height:12px;background:#00f000;border-left:1px solid #e8ffe8;border-top:1px solid #e8ffe8"></div>
<div class="a" style="left:115px;top:609px;width:20px;height:12px;background:#00f000;border-left:1px solid #e8ffe8;border-top:1px solid #e8ffe8"></div>
<div class="a" style="left:136px;top:609px;width:20px;height:12px;background:#00f000;border-left:1px solid #e8ffe8;border-top:1px solid #e8ffe8"></div>
<div class="a" style="left:157px;top:609px;width:20px;height:12px;background:#00f000;border-left:1px solid #e8ffe8;border-top:1px solid #e8ffe8"></div>
<div class="a" style="left:178px;top:609px;width:20px;height:12px;background:#00f000;border-left:1px solid #e8ffe8;border-top:1px solid #e8ffe8"></div>
<div class="a" style="left:199px;top:609px;width:20px;height:12px;background:#00f000;border-left:1px solid #e8ffe8;border-top:1px solid #e8ffe8"></div>
<div class="a" style="left:220px;top:609px;width:20px;height:12px;background:#00f000;border-left:1px solid #e8ffe8;border-top:1px solid #e8ffe8"></div>
<div class="a" style="left:241px;top:609px;width:20px;height:12px;background:#00f000;border-left:1px solid #e8ffe8;border-top:1px solid #e8ffe8"></div>
<div class="a" style="left:262px;top:609px;width:20px;height:12px;background:#00f000;border-left:1px solid #e8ffe8;border-top:1px solid #e8ffe8"></div>
<div class="a" style="left:283px;top:609px;width:20px;height:12px;background:#00f000;border-left:1px solid #e8ffe8;border-top:1px solid #e8ffe8"></div>
<div class="a" style="left:304px;top:609px;width:20px;height:12px;background:#00f000;border-left:1px solid #e8ffe8;border-top:1px solid #e8ffe8"></div>
<div class="a" style="left:325px;top:609px;width:20px;height:12px;background:#00f000;border-left:1px solid #e8ffe8;border-top:1px solid #e8ffe8"></div>
<div class="a" style="left:346px;top:609px;width:20px;height:12px;background:#00f000;border-left:1px solid #e8ffe8;border-top:1px solid #e8ffe8"></div>
<div class="a" style="left:367px;top:609px;width:20px;height:12px;background:#00f000;border-left:1px solid #e8ffe8;border-top:1px solid #e8ffe8"></div>
<div class="a" style="left:388px;top:609px;width:20px;height:12px;background:#00f000;border-left:1px solid #e8ffe8;border-top:1px solid #e8ffe8"></div>
<div class="a" style="left:409px;top:609px;width:18px;height:12px;background:#00f000;border-left:1px solid #e8ffe8;border-top:1px solid #e8ffe8"></div>
<div class="a" style="left:25px;top:591.84px;width:406px;text-align:center;font-size:12px;line-height:12px;white-space:nowrap;font-weight:bold">Elapsed:&nbsp; 00:00:02</div>
<div class="a" style="left:25px;top:624.84px;width:406px;text-align:center;font-size:12px;line-height:12px;white-space:nowrap;font-weight:bold;letter-spacing:-0.15px">WO's:&nbsp; 13&nbsp; TO's:&nbsp; 2&nbsp; PO's:&nbsp; 19&nbsp; Errors:&nbsp; 39</div>
<div class="a" style="left:68px;top:668px;width:38px;height:38px;border:1px solid #fff;border-right-color:#a0a0a0;border-bottom-color:#a0a0a0"></div>
<div class="a" style="left:23px;top:709.38px;width:50px;text-align:center;font-size:9px;line-height:9px;white-space:nowrap;color:#444">Exit</div>
<div class="a" style="left:61px;top:709.38px;width:50px;text-align:center;font-size:9px;line-height:9px;white-space:nowrap;color:#444">Go</div>
<div class="a" style="left:99px;top:709.38px;width:50px;text-align:center;font-size:9px;line-height:9px;white-space:nowrap;color:#444">Repeat</div>
<div class="a" style="left:137px;top:709.38px;width:50px;text-align:center;font-size:9px;line-height:9px;white-space:nowrap;color:#444">Pref</div>
<div class="a" style="left:175px;top:709.38px;width:50px;text-align:center;font-size:9px;line-height:9px;white-space:nowrap;color:#444">Errors</div>
<div class="a" style="left:213px;top:709.38px;width:50px;text-align:center;font-size:9px;line-height:9px;white-space:nowrap;color:#444">Sched</div>
<svg class="a" style="left:34px;top:671px" width="34" height="34" viewBox="0 0 34 34"><defs><linearGradient id="gex" x1="0" y1="0" x2="0" y2="1"><stop offset="0" stop-color="#ffffff"/><stop offset="1" stop-color="#dcdcdc"/></linearGradient></defs><path d="M5 15L15.5 5L26 15V29.5H5Z" fill="url(#gex)" stroke="#808080" stroke-width="1"/><rect x="21" y="3" width="3.5" height="7" fill="#d8d8d8" stroke="#999" stroke-width="0.6"/><path d="M2 17L15.5 4L29 17" fill="none" stroke="#a85a10" stroke-width="4.2" stroke-linejoin="round" stroke-linecap="round"/><path d="M2 17L15.5 4L29 17" fill="none" stroke="#f29a2a" stroke-width="2.6" stroke-linejoin="round" stroke-linecap="round"/><rect x="11" y="18" width="3.5" height="8" fill="#c4cce0" stroke="#5a6a90" stroke-width="0.9"/><rect x="16" y="18" width="3.5" height="8" fill="#c4cce0" stroke="#5a6a90" stroke-width="0.9"/></svg>
<svg class="a" style="left:72px;top:670px" width="34" height="34" viewBox="0 0 34 34"><rect x="0.5" y="1.5" width="29" height="27" rx="1.5" fill="#fff" stroke="#6e7480"/><rect x="1" y="2" width="28" height="4.5" fill="#86a8e6"/><path d="M7.5 7V28M15 7V28M22 7V28" stroke="#d4d8e2"/><rect x="2" y="9" width="5" height="2" fill="#d04040"/><rect x="8" y="12" width="5" height="2" fill="#3d5aa8"/><rect x="8" y="15" width="12" height="2" fill="#d04040"/><circle cx="24.5" cy="24.5" r="7" fill="#fff" stroke="#2c54b0" stroke-width="2.2"/><path d="M24.5 20V24.5L27.5 27" fill="none" stroke="#333" stroke-width="1.1"/></svg>
<svg class="a" style="left:110px;top:671px" width="34" height="34" viewBox="0 0 34 34"><defs><linearGradient id="grp" x1="0" y1="0" x2="0" y2="1"><stop offset="0" stop-color="#a8ccf6"/><stop offset="1" stop-color="#3c7ad0"/></linearGradient></defs><path d="M15 1C23 1 27.5 5 27.5 11.5H31.5L22.5 20.5L14 11.5H19C19 8 17.5 6 15 5.5Z" fill="url(#grp)" stroke="#2a5aa8" stroke-width="0.8"/><path d="M17 30.5C9 30.5 4.5 26.5 4.5 20H0.5L9.5 11L18 20H13C13 23.5 14.5 25.5 17 26Z" fill="url(#grp)" stroke="#2a5aa8" stroke-width="0.8"/></svg>
<svg class="a" style="left:150px;top:671px" width="34" height="34" viewBox="0 0 34 34"><defs><linearGradient id="gpp" x1="0" y1="0" x2="1" y2="1"><stop offset="0" stop-color="#ffffff"/><stop offset="1" stop-color="#e2e2e2"/></linearGradient></defs><path d="M1.5 1.5H22.5V31.5H1.5Z" fill="url(#gpp)" stroke="#a8a8a8" stroke-width="1"/><path d="M23.5 32C18.5 28 16 25.5 16 22.5C16 20.5 17.5 19 19.5 19C21.3 19 22.7 20 23.5 21.5C24.3 20 25.7 19 27.5 19C29.5 19 31 20.5 31 22.5C31 25.5 28.5 28 23.5 32Z" fill="#d01414" stroke="#8a0c0c" stroke-width="0.6"/><ellipse cx="19.8" cy="21.8" rx="1.6" ry="1.1" fill="#f08080"/></svg>
<svg class="a" style="left:184px;top:672px" width="34" height="34" viewBox="0 0 34 34"><path d="M17 1.5L33 30.5H1Z" fill="#f8d030" stroke="#9a7a10" stroke-width="1.2" stroke-linejoin="round"/><path d="M17 9V22" stroke="#111" stroke-width="3.2"/><circle cx="17" cy="26" r="1.8" fill="#111"/></svg>
<svg class="a" style="left:223px;top:670px" width="34" height="34" viewBox="0 0 34 34"><rect x="0.5" y="1.5" width="29" height="27" rx="1.5" fill="#fff" stroke="#6e7480"/><rect x="1" y="2" width="28" height="4.5" fill="#86a8e6"/><path d="M7.5 7V28M15 7V28M22 7V28" stroke="#d4d8e2"/><rect x="2" y="9" width="5" height="2" fill="#d04040"/><rect x="8" y="12" width="5" height="2" fill="#3d5aa8"/><rect x="8" y="15" width="12" height="2" fill="#d04040"/><circle cx="24.5" cy="24.5" r="7" fill="#fff" stroke="#2c54b0" stroke-width="2.2"/><path d="M24.5 20V24.5L27.5 27" fill="none" stroke="#333" stroke-width="1.1"/></svg>
<div class="a" style="left:455px;top:202px;width:815px;height:553px;background:#f3f6fa;border-right:1px solid #6a6a6a;border-bottom:2px solid #5a5a5a"></div>
<div class="a" style="left:461px;top:208px;width:802px;height:545px;background:#f0f0f0"></div>
<div class="a" style="left:461px;top:208px;width:802px;height:60px;background:#028a64"></div>
<div class="a" style="left:461px;top:267px;width:802px;height:1px;background:#1d6a52"></div>
<div class="a" style="left:461px;top:268px;width:802px;height:1px;background:#dcfff4"></div>
<svg class="a" style="left:475.5px;top:216.5px" width="42" height="42" viewBox="-21 -21 42 42"><defs><radialGradient id="lg" cx="0.35" cy="0.3" r="0.8"><stop offset="0" stop-color="#ffd53a"/><stop offset="0.55" stop-color="#e7a91e"/><stop offset="1" stop-color="#b07812"/></radialGradient></defs><circle r="20" fill="#0a5a40" opacity="0.5"/><circle r="19.3" fill="url(#lg)" stroke="#f6e27a" stroke-width="0.9"/><path d="M-16 7C-10 -4 0 -9 13.6 -11.3C14 -2 10 9 1 9.5C-6 10 -12 9 -16 7Z" fill="#62ad97"/><path d="M-16 7.5C-9 2.5 -2 4 4 2.5C8 1.5 10 0 11.5 -2" fill="none" stroke="#3f7a62" stroke-width="1.4"/></svg>
<div class="a" style="left:533.5px;top:231.07px;font-size:20px;line-height:20px;white-space:nowrap;font-weight:bold;color:#fff;letter-spacing:0.24px">Generate Recommended Work Orders</div>
<svg class="a" style="left:1154px;top:215px" width="9" height="11"><path d="M1.3 3.3C1.3 1.4 2.5 0.9 4.2 0.9C6 0.9 7.3 1.8 7.3 3.2C7.3 4.8 5.3 5.2 4.6 6.1V7.2" fill="none" stroke="#fff" stroke-width="2.2"/><rect x="3.3" y="8.3" width="2.7" height="2.2" fill="#fff"/></svg>
<div class="a" style="left:1179px;top:222px;width:7px;height:2px;background:#fff"></div>
<div class="a" style="left:1203px;top:215px;width:11px;height:10px;border:2px solid #fff"></div>
<svg class="a" style="left:1237px;top:214px" width="11" height="11"><path d="M1.5 1.5L9.5 9.5M9.5 1.5L1.5 9.5" stroke="#fff" stroke-width="2.3"/></svg>
<div class="a" style="left:467px;top:274px;width:788px;height:405px;border-top:1px solid #fff;border-left:1px solid #fff;border-bottom:2px solid #8a8a8a;border-right:2px solid #8a8a8a"></div>
<div class="a" style="left:517px;top:284px;width:679px;height:304px;border:1px solid #c4c4c4;box-shadow:inset 1px 1px 0 #fff,1px 1px 0 #fff"></div>
<div class="a" style="left:529px;top:279.42px;font-size:12.5px;line-height:12.5px;white-space:nowrap;background:#f0f0f0;padding:0 2px">Recommended Orders List</div>
<div class="a" style="left:528px;top:294px;width:661px;height:294px;background:#fff;border:1px solid #000"></div>
<div class="a" style="left:529px;top:295px;width:659px;height:18px;background:#b6c6b8"></div>
<div class="a" style="left:528px;top:313px;width:642px;height:1px;background:#000"></div>
<div class="a" style="left:529px;top:295px;width:25px;height:18px;border-top:1px solid #fff;border-left:1px solid #fff"></div>
<div class="a" style="left:528px;top:298.84px;width:26px;text-align:center;font-size:12px;line-height:12px;white-space:nowrap;color:#111">Gen</div>
<div class="a" style="left:555px;top:295px;width:68px;height:18px;border-top:1px solid #fff;border-left:1px solid #fff"></div>
<div class="a" style="left:554px;top:295px;width:1px;height:19px;background:#000"></div>
<div class="a" style="left:554px;top:298.84px;width:69px;text-align:center;font-size:12px;line-height:12px;white-space:nowrap;color:#111">Order</div>
<div class="a" style="left:624px;top:295px;width:151px;height:18px;border-top:1px solid #fff;border-left:1px solid #fff"></div>
<div class="a" style="left:623px;top:295px;width:1px;height:19px;background:#000"></div>
<div class="a" style="left:623px;top:298.84px;width:152px;text-align:center;font-size:12px;line-height:12px;white-space:nowrap;color:#111">Item</div>
<div class="a" style="left:776px;top:295px;width:84px;height:18px;border-top:1px solid #fff;border-left:1px solid #fff"></div>
<div class="a" style="left:775px;top:295px;width:1px;height:19px;background:#000"></div>
<div class="a" style="left:775px;top:298.84px;width:85px;text-align:center;font-size:12px;line-height:12px;white-space:nowrap;color:#111">Quantity</div>
<div class="a" style="left:861px;top:295px;width:57px;height:18px;border-top:1px solid #fff;border-left:1px solid #fff"></div>
<div class="a" style="left:860px;top:295px;width:1px;height:19px;background:#000"></div>
<div class="a" style="left:860px;top:298.84px;width:58px;text-align:center;font-size:12px;line-height:12px;white-space:nowrap;color:#111">U/M</div>
<div class="a" style="left:919px;top:295px;width:66px;height:18px;border-top:1px solid #fff;border-left:1px solid #fff"></div>
<div class="a" style="left:918px;top:295px;width:1px;height:19px;background:#000"></div>
<div class="a" style="left:918px;top:298.84px;width:67px;text-align:center;font-size:12px;line-height:12px;white-space:nowrap;color:#111">Start</div>
<div class="a" style="left:986px;top:295px;width:66px;height:18px;border-top:1px solid #fff;border-left:1px solid #fff"></div>
<div class="a" style="left:985px;top:295px;width:1px;height:19px;background:#000"></div>
<div class="a" style="left:985px;top:298.84px;width:67px;text-align:center;font-size:12px;line-height:12px;white-space:nowrap;color:#111">Needed</div>
<div class="a" style="left:1053px;top:295px;width:57px;height:18px;border-top:1px solid #fff;border-left:1px solid #fff"></div>
<div class="a" style="left:1052px;top:295px;width:1px;height:19px;background:#000"></div>
<div class="a" style="left:1052px;top:298.84px;width:58px;text-align:center;font-size:12px;line-height:12px;white-space:nowrap;color:#111">Mtl Loc</div>
<div class="a" style="left:1111px;top:295px;width:58px;height:18px;border-top:1px solid #fff;border-left:1px solid #fff"></div>
<div class="a" style="left:1110px;top:295px;width:1px;height:19px;background:#000"></div>
<div class="a" style="left:1110px;top:298.84px;width:59px;text-align:center;font-size:12px;line-height:12px;white-space:nowrap;color:#111">FG Loc</div>
<div class="a" style="left:1169px;top:295px;width:1px;height:19px;background:#000"></div>
<div class="a" style="left:529px;top:331px;width:640px;height:1px;background:#a8a8a8"></div>
<div class="a" style="left:537px;top:318px;width:9px;height:9px;border:1.5px solid #111;background:#fff"></div>
<div class="a" style="left:557px;top:316.84px;font-size:12px;line-height:12px;white-space:nowrap;color:#c8102e">M00001</div>
<div class="a" style="left:626px;top:316.84px;font-size:12px;line-height:12px;white-space:nowrap;color:#c8102e">MBBA02</div>
<div class="a" style="left:775px;top:316.84px;width:82px;text-align:right;font-size:12px;line-height:12px;white-space:nowrap;color:#c8102e">5.000</div>
<div class="a" style="left:863px;top:316.84px;font-size:12px;line-height:12px;white-space:nowrap;color:#c8102e">EACH</div>
<div class="a" style="left:921px;top:316.84px;font-size:12px;line-height:12px;white-space:nowrap;color:#c8102e">07/20/2025</div>
<div class="a" style="left:988px;top:316.84px;font-size:12px;line-height:12px;white-space:nowrap;color:#c8102e">07/27/2025</div>
<div class="a" style="left:1055px;top:316.84px;font-size:12px;line-height:12px;white-space:nowrap;color:#c8102e">LOC1</div>
<div class="a" style="left:1113px;top:316.84px;font-size:12px;line-height:12px;white-space:nowrap;color:#c8102e">LOC1</div>
<div class="a" style="left:529px;top:349px;width:640px;height:1px;background:#a8a8a8"></div>
<div class="a" style="left:537px;top:336px;width:9px;height:9px;border:1.5px solid #111;background:#fff"></div>
<div class="a" style="left:557px;top:334.84px;font-size:12px;line-height:12px;white-space:nowrap;color:#c8102e">M00002</div>
<div class="a" style="left:626px;top:334.84px;font-size:12px;line-height:12px;white-space:nowrap;color:#c8102e">MBFG01</div>
<div class="a" style="left:775px;top:334.84px;width:82px;text-align:right;font-size:12px;line-height:12px;white-space:nowrap;color:#c8102e">4.000</div>
<div class="a" style="left:863px;top:334.84px;font-size:12px;line-height:12px;white-space:nowrap;color:#c8102e">EACH</div>
<div class="a" style="left:921px;top:334.84px;font-size:12px;line-height:12px;white-space:nowrap;color:#c8102e">07/20/2025</div>
<div class="a" style="left:988px;top:334.84px;font-size:12px;line-height:12px;white-space:nowrap;color:#c8102e">07/27/2025</div>
<div class="a" style="left:1055px;top:334.84px;font-size:12px;line-height:12px;white-space:nowrap;color:#c8102e">LOC1</div>
<div class="a" style="left:1113px;top:334.84px;font-size:12px;line-height:12px;white-space:nowrap;color:#c8102e">LOC1</div>
<div class="a" style="left:529px;top:367px;width:640px;height:1px;background:#a8a8a8"></div>
<div class="a" style="left:537px;top:354px;width:9px;height:9px;border:1.5px solid #111;background:#fff"></div>
<div class="a" style="left:557px;top:352.84px;font-size:12px;line-height:12px;white-space:nowrap;color:#c8102e">M00003</div>
<div class="a" style="left:626px;top:352.84px;font-size:12px;line-height:12px;white-space:nowrap;color:#c8102e">MBFG02</div>
<div class="a" style="left:775px;top:352.84px;width:82px;text-align:right;font-size:12px;line-height:12px;white-space:nowrap;color:#c8102e">1.000</div>
<div class="a" style="left:863px;top:352.84px;font-size:12px;line-height:12px;white-space:nowrap;color:#c8102e">EACH</div>
<div class="a" style="left:921px;top:352.84px;font-size:12px;line-height:12px;white-space:nowrap;color:#c8102e">07/20/2025</div>
<div class="a" style="left:988px;top:352.84px;font-size:12px;line-height:12px;white-space:nowrap;color:#c8102e">07/27/2025</div>
<div class="a" style="left:1055px;top:352.84px;font-size:12px;line-height:12px;white-space:nowrap;color:#c8102e">LOC1</div>
<div class="a" style="left:1113px;top:352.84px;font-size:12px;line-height:12px;white-space:nowrap;color:#c8102e">LOC1</div>
<div class="a" style="left:529px;top:385px;width:640px;height:1px;background:#a8a8a8"></div>
<div class="a" style="left:537px;top:372px;width:9px;height:9px;border:1.5px solid #111;background:#fff"></div>
<div class="a" style="left:557px;top:370.84px;font-size:12px;line-height:12px;white-space:nowrap;color:#c8102e">M00004</div>
<div class="a" style="left:626px;top:370.84px;font-size:12px;line-height:12px;white-space:nowrap;color:#c8102e">MBFR19</div>
<div class="a" style="left:775px;top:370.84px;width:82px;text-align:right;font-size:12px;line-height:12px;white-space:nowrap;color:#c8102e">1.000</div>
<div class="a" style="left:863px;top:370.84px;font-size:12px;line-height:12px;white-space:nowrap;color:#c8102e">EACH</div>
<div class="a" style="left:921px;top:370.84px;font-size:12px;line-height:12px;white-space:nowrap;color:#c8102e">07/20/2025</div>
<div class="a" style="left:988px;top:370.84px;font-size:12px;line-height:12px;white-space:nowrap;color:#c8102e">07/27/2025</div>
<div class="a" style="left:1055px;top:370.84px;font-size:12px;line-height:12px;white-space:nowrap;color:#c8102e">LOC1</div>
<div class="a" style="left:1113px;top:370.84px;font-size:12px;line-height:12px;white-space:nowrap;color:#c8102e">LOC1</div>
<div class="a" style="left:529px;top:403px;width:640px;height:1px;background:#a8a8a8"></div>
<div class="a" style="left:537px;top:390px;width:9px;height:9px;border:1.5px solid #111;background:#fff"></div>
<div class="a" style="left:557px;top:388.84px;font-size:12px;line-height:12px;white-space:nowrap;color:#c8102e">M00005</div>
<div class="a" style="left:626px;top:388.84px;font-size:12px;line-height:12px;white-space:nowrap;color:#c8102e">MBFR29</div>
<div class="a" style="left:775px;top:388.84px;width:82px;text-align:right;font-size:12px;line-height:12px;white-space:nowrap;color:#c8102e">1.000</div>
<div class="a" style="left:863px;top:388.84px;font-size:12px;line-height:12px;white-space:nowrap;color:#c8102e">EACH</div>
<div class="a" style="left:921px;top:388.84px;font-size:12px;line-height:12px;white-space:nowrap;color:#c8102e">07/20/2025</div>
<div class="a" style="left:988px;top:388.84px;font-size:12px;line-height:12px;white-space:nowrap;color:#c8102e">07/27/2025</div>
<div class="a" style="left:1055px;top:388.84px;font-size:12px;line-height:12px;white-space:nowrap;color:#c8102e">LOC1</div>
<div class="a" style="left:1113px;top:388.84px;font-size:12px;line-height:12px;white-space:nowrap;color:#c8102e">LOC1</div>
<div class="a" style="left:529px;top:421px;width:640px;height:1px;background:#a8a8a8"></div>
<div class="a" style="left:537px;top:408px;width:9px;height:9px;border:1.5px solid #111;background:#fff"></div>
<div class="a" style="left:557px;top:406.84px;font-size:12px;line-height:12px;white-space:nowrap;color:#c8102e">M00006</div>
<div class="a" style="left:626px;top:406.84px;font-size:12px;line-height:12px;white-space:nowrap;color:#c8102e">MBSP01</div>
<div class="a" style="left:775px;top:406.84px;width:82px;text-align:right;font-size:12px;line-height:12px;white-space:nowrap;color:#c8102e">1.000</div>
<div class="a" style="left:863px;top:406.84px;font-size:12px;line-height:12px;white-space:nowrap;color:#c8102e">EACH</div>
<div class="a" style="left:921px;top:406.84px;font-size:12px;line-height:12px;white-space:nowrap;color:#c8102e">07/20/2025</div>
<div class="a" style="left:988px;top:406.84px;font-size:12px;line-height:12px;white-space:nowrap;color:#c8102e">07/27/2025</div>
<div class="a" style="left:1055px;top:406.84px;font-size:12px;line-height:12px;white-space:nowrap;color:#c8102e">LOC1</div>
<div class="a" style="left:1113px;top:406.84px;font-size:12px;line-height:12px;white-space:nowrap;color:#c8102e">LOC1</div>
<div class="a" style="left:529px;top:439px;width:640px;height:1px;background:#a8a8a8"></div>
<div class="a" style="left:537px;top:426px;width:9px;height:9px;border:1.5px solid #111;background:#fff"></div>
<div class="a" style="left:557px;top:424.84px;font-size:12px;line-height:12px;white-space:nowrap;color:#c8102e">M00007</div>
<div class="a" style="left:626px;top:424.84px;font-size:12px;line-height:12px;white-space:nowrap;color:#c8102e">MBBR02</div>
<div class="a" style="left:775px;top:424.84px;width:82px;text-align:right;font-size:12px;line-height:12px;white-space:nowrap;color:#c8102e">1.000</div>
<div class="a" style="left:863px;top:424.84px;font-size:12px;line-height:12px;white-space:nowrap;color:#c8102e">EACH</div>
<div class="a" style="left:921px;top:424.84px;font-size:12px;line-height:12px;white-space:nowrap;color:#c8102e">07/20/2025</div>
<div class="a" style="left:988px;top:424.84px;font-size:12px;line-height:12px;white-space:nowrap;color:#c8102e">07/27/2025</div>
<div class="a" style="left:1055px;top:424.84px;font-size:12px;line-height:12px;white-space:nowrap;color:#c8102e">LOC1</div>
<div class="a" style="left:1113px;top:424.84px;font-size:12px;line-height:12px;white-space:nowrap;color:#c8102e">LOC1</div>
<div class="a" style="left:529px;top:457px;width:640px;height:1px;background:#a8a8a8"></div>
<div class="a" style="left:537px;top:444px;width:9px;height:9px;border:1.5px solid #111;background:#fff"></div>
<div class="a" style="left:557px;top:442.84px;font-size:12px;line-height:12px;white-space:nowrap;color:#c8102e">M00008</div>
<div class="a" style="left:626px;top:442.84px;font-size:12px;line-height:12px;white-space:nowrap;color:#c8102e">MBFR02</div>
<div class="a" style="left:775px;top:442.84px;width:82px;text-align:right;font-size:12px;line-height:12px;white-space:nowrap;color:#c8102e">1.000</div>
<div class="a" style="left:863px;top:442.84px;font-size:12px;line-height:12px;white-space:nowrap;color:#c8102e">EACH</div>
<div class="a" style="left:921px;top:442.84px;font-size:12px;line-height:12px;white-space:nowrap;color:#c8102e">07/20/2025</div>
<div class="a" style="left:988px;top:442.84px;font-size:12px;line-height:12px;white-space:nowrap;color:#c8102e">07/27/2025</div>
<div class="a" style="left:1055px;top:442.84px;font-size:12px;line-height:12px;white-space:nowrap;color:#c8102e">LOC1</div>
<div class="a" style="left:1113px;top:442.84px;font-size:12px;line-height:12px;white-space:nowrap;color:#c8102e">LOC1</div>
<div class="a" style="left:529px;top:475px;width:640px;height:1px;background:#a8a8a8"></div>
<div class="a" style="left:537px;top:462px;width:9px;height:9px;border:1.5px solid #111;background:#fff"></div>
<div class="a" style="left:557px;top:460.84px;font-size:12px;line-height:12px;white-space:nowrap;color:#c8102e">M00009</div>
<div class="a" style="left:626px;top:460.84px;font-size:12px;line-height:12px;white-space:nowrap;color:#c8102e">MBHB02</div>
<div class="a" style="left:775px;top:460.84px;width:82px;text-align:right;font-size:12px;line-height:12px;white-space:nowrap;color:#c8102e">1.000</div>
<div class="a" style="left:863px;top:460.84px;font-size:12px;line-height:12px;white-space:nowrap;color:#c8102e">EACH</div>
<div class="a" style="left:921px;top:460.84px;font-size:12px;line-height:12px;white-space:nowrap;color:#c8102e">07/20/2025</div>
<div class="a" style="left:988px;top:460.84px;font-size:12px;line-height:12px;white-space:nowrap;color:#c8102e">07/27/2025</div>
<div class="a" style="left:1055px;top:460.84px;font-size:12px;line-height:12px;white-space:nowrap;color:#c8102e">LOC1</div>
<div class="a" style="left:1113px;top:460.84px;font-size:12px;line-height:12px;white-space:nowrap;color:#c8102e">LOC1</div>
<div class="a" style="left:529px;top:493px;width:640px;height:1px;background:#a8a8a8"></div>
<div class="a" style="left:537px;top:480px;width:9px;height:9px;border:1.5px solid #111;background:#fff"></div>
<div class="a" style="left:557px;top:478.84px;font-size:12px;line-height:12px;white-space:nowrap;color:#c8102e">M00010</div>
<div class="a" style="left:626px;top:478.84px;font-size:12px;line-height:12px;white-space:nowrap;color:#c8102e">MBWH01</div>
<div class="a" style="left:775px;top:478.84px;width:82px;text-align:right;font-size:12px;line-height:12px;white-space:nowrap;color:#c8102e">1.000</div>
<div class="a" style="left:863px;top:478.84px;font-size:12px;line-height:12px;white-space:nowrap;color:#c8102e">EACH</div>
<div class="a" style="left:921px;top:478.84px;font-size:12px;line-height:12px;white-space:nowrap;color:#c8102e">07/20/2025</div>
<div class="a" style="left:988px;top:478.84px;font-size:12px;line-height:12px;white-space:nowrap;color:#c8102e">07/27/2025</div>
<div class="a" style="left:1055px;top:478.84px;font-size:12px;line-height:12px;white-space:nowrap;color:#c8102e">LOC1</div>
<div class="a" style="left:1113px;top:478.84px;font-size:12px;line-height:12px;white-space:nowrap;color:#c8102e">LOC1</div>
<div class="a" style="left:529px;top:511px;width:640px;height:1px;background:#a8a8a8"></div>
<div class="a" style="left:537px;top:498px;width:9px;height:9px;border:1.5px solid #111;background:#fff"></div>
<div class="a" style="left:557px;top:496.84px;font-size:12px;line-height:12px;white-space:nowrap;color:#c8102e">M00011</div>
<div class="a" style="left:626px;top:496.84px;font-size:12px;line-height:12px;white-space:nowrap;color:#c8102e">MBHB03</div>
<div class="a" style="left:775px;top:496.84px;width:82px;text-align:right;font-size:12px;line-height:12px;white-space:nowrap;color:#c8102e">1.000</div>
<div class="a" style="left:863px;top:496.84px;font-size:12px;line-height:12px;white-space:nowrap;color:#c8102e">EACH</div>
<div class="a" style="left:921px;top:496.84px;font-size:12px;line-height:12px;white-space:nowrap;color:#c8102e">07/20/2025</div>
<div class="a" style="left:988px;top:496.84px;font-size:12px;line-height:12px;white-space:nowrap;color:#c8102e">07/27/2025</div>
<div class="a" style="left:1055px;top:496.84px;font-size:12px;line-height:12px;white-space:nowrap;color:#c8102e">LOC1</div>
<div class="a" style="left:1113px;top:496.84px;font-size:12px;line-height:12px;white-space:nowrap;color:#c8102e">LOC1</div>
<div class="a" style="left:529px;top:529px;width:640px;height:1px;background:#a8a8a8"></div>
<div class="a" style="left:537px;top:516px;width:9px;height:9px;border:1.5px solid #111;background:#fff"></div>
<div class="a" style="left:557px;top:514.84px;font-size:12px;line-height:12px;white-space:nowrap;color:#c8102e">M00012</div>
<div class="a" style="left:626px;top:514.84px;font-size:12px;line-height:12px;white-space:nowrap;color:#c8102e">MBWH02</div>
<div class="a" style="left:775px;top:514.84px;width:82px;text-align:right;font-size:12px;line-height:12px;white-space:nowrap;color:#c8102e">1.000</div>
<div class="a" style="left:863px;top:514.84px;font-size:12px;line-height:12px;white-space:nowrap;color:#c8102e">EACH</div>
<div class="a" style="left:921px;top:514.84px;font-size:12px;line-height:12px;white-space:nowrap;color:#c8102e">07/20/2025</div>
<div class="a" style="left:988px;top:514.84px;font-size:12px;line-height:12px;white-space:nowrap;color:#c8102e">07/27/2025</div>
<div class="a" style="left:1055px;top:514.84px;font-size:12px;line-height:12px;white-space:nowrap;color:#c8102e">LOC1</div>
<div class="a" style="left:1113px;top:514.84px;font-size:12px;line-height:12px;white-space:nowrap;color:#c8102e">LOC1</div>
<div class="a" style="left:529px;top:547px;width:640px;height:1px;background:#a8a8a8"></div>
<div class="a" style="left:537px;top:534px;width:9px;height:9px;border:1.5px solid #111;background:#fff"></div>
<div class="a" style="left:557px;top:532.84px;font-size:12px;line-height:12px;white-space:nowrap;color:#c8102e">M00013</div>
<div class="a" style="left:626px;top:532.84px;font-size:12px;line-height:12px;white-space:nowrap;color:#c8102e">TEST01</div>
<div class="a" style="left:775px;top:532.84px;width:82px;text-align:right;font-size:12px;line-height:12px;white-space:nowrap;color:#c8102e">1.000</div>
<div class="a" style="left:863px;top:532.84px;font-size:12px;line-height:12px;white-space:nowrap;color:#c8102e">EACH</div>
<div class="a" style="left:921px;top:532.84px;font-size:12px;line-height:12px;white-space:nowrap;color:#c8102e">07/20/2025</div>
<div class="a" style="left:988px;top:532.84px;font-size:12px;line-height:12px;white-space:nowrap;color:#c8102e">07/27/2025</div>
<div class="a" style="left:1055px;top:532.84px;font-size:12px;line-height:12px;white-space:nowrap;color:#c8102e">LOC1</div>
<div class="a" style="left:1113px;top:532.84px;font-size:12px;line-height:12px;white-space:nowrap;color:#c8102e">LOC1</div>
<div class="a" style="left:529px;top:565px;width:640px;height:1px;background:#a8a8a8"></div>
<div class="a" style="left:554px;top:314px;width:1px;height:252px;background:#a8a8a8"></div>
<div class="a" style="left:623px;top:314px;width:1px;height:252px;background:#a8a8a8"></div>
<div class="a" style="left:775px;top:314px;width:1px;height:252px;background:#a8a8a8"></div>
<div class="a" style="left:860px;top:314px;width:1px;height:252px;background:#a8a8a8"></div>
<div class="a" style="left:918px;top:314px;width:1px;height:252px;background:#a8a8a8"></div>
<div class="a" style="left:985px;top:314px;width:1px;height:252px;background:#a8a8a8"></div>
<div class="a" style="left:1052px;top:314px;width:1px;height:252px;background:#a8a8a8"></div>
<div class="a" style="left:1110px;top:314px;width:1px;height:252px;background:#a8a8a8"></div>
<div class="a" style="left:1170px;top:314px;width:18px;height:256px;background:repeating-conic-gradient(#e4e4e4 0 25%,#fbfbfb 0 50%) 0 0/2px 2px"></div>
<div class="a" style="left:1170px;top:296px;width:17px;height:17px;background:#f0f0f0;border:1px solid #fff;border-right-color:#8a8a8a;border-bottom-color:#8a8a8a;box-shadow:1px 1px 0 #555"></div>
<div class="a" style="left:1174.5px;top:302.5px;width:0;height:0;border-left:4px solid transparent;border-right:4px solid transparent;border-bottom:4px solid #9a9a9a"></div>
<div class="a" style="left:529px;top:570px;width:5px;height:17px;background:#000"></div>
<div class="a" style="left:534px;top:570px;width:636px;height:16px;background:repeating-conic-gradient(#e4e4e4 0 25%,#fbfbfb 0 50%) 0 0/2px 2px"></div>
<div class="a" style="left:534px;top:570px;width:16px;height:16px;background:#f0f0f0;border:1px solid #fff;border-right-color:#8a8a8a;border-bottom-color:#8a8a8a;box-shadow:1px 1px 0 #555"></div>
<div class="a" style="left:539.0px;top:574px;width:0;height:0;border-top:4px solid transparent;border-bottom:4px solid transparent;border-right:4px solid #000"></div>
<div class="a" style="left:551px;top:570px;width:150px;height:16px;background:#f0f0f0;border:1px solid #fff;border-right-color:#8a8a8a;border-bottom-color:#8a8a8a;box-shadow:1px 1px 0 #555"></div>
<div class="a" style="left:529px;top:586px;width:660px;height:2px;background:#000"></div>
<div class="a" style="left:534px;top:598px;width:12px;height:12px;border:2px solid #6a6a6a;background:#fff"></div>
<div class="a" style="left:550.5px;top:598.59px;font-size:12.3px;line-height:12.3px;white-space:nowrap;">Set FG location to SO Ship From location</div>
<div class="a" style="left:549px;top:621.42px;font-size:12.5px;line-height:12.5px;white-space:nowrap;">Filter</div>
<div class="a" style="left:583px;top:617px;width:170px;height:23px;background:#fff;border:1px solid #6e6e6e"></div>
<div class="a" style="left:733px;top:619px;width:18px;height:19px;background:#f2f2f2;border:1px solid #b4b4b4"></div>
<div class="a" style="left:738.0px;top:626.5px;width:0;height:0;border-left:4px solid transparent;border-right:4px solid transparent;border-top:4px solid #000"></div>
<div class="a" style="left:587px;top:622.64px;font-size:12px;line-height:12px;white-space:nowrap;">None</div>
<div class="a" style="left:533.5px;top:650.42px;font-size:12.5px;line-height:12.5px;white-space:nowrap;">Tagged</div>
<div class="a" style="left:583px;top:645px;width:40px;height:23px;background:#f0f0f0;border:1px solid #7a7a7a"></div>
<div class="a" style="left:583px;top:650.64px;width:34px;text-align:right;font-size:12px;line-height:12px;white-space:nowrap;">0</div>
<div class="a" style="left:628.5px;top:650.42px;font-size:12.5px;line-height:12.5px;white-space:nowrap;">of</div>
<div class="a" style="left:645px;top:645px;width:40px;height:23px;background:#f0f0f0;border:1px solid #7a7a7a"></div>
<div class="a" style="left:645px;top:650.64px;width:34px;text-align:right;font-size:12px;line-height:12px;white-space:nowrap;">13</div>
<div class="a" style="left:725px;top:650.42px;font-size:12.5px;line-height:12.5px;white-space:nowrap;">Or</div>
<div class="a" style="left:461px;top:729.38px;width:60px;text-align:center;font-size:9px;line-height:9px;white-space:nowrap;color:#444">Exit</div>
<div class="a" style="left:500px;top:729.38px;width:60px;text-align:center;font-size:9px;line-height:9px;white-space:nowrap;color:#444">Generate</div>
<div class="a" style="left:537px;top:729.38px;width:60px;text-align:center;font-size:9px;line-height:9px;white-space:nowrap;color:#444">All</div>
<div class="a" style="left:575px;top:729.38px;width:60px;text-align:center;font-size:9px;line-height:9px;white-space:nowrap;color:#444">None</div>
<div class="a" style="left:613px;top:729.38px;width:60px;text-align:center;font-size:9px;line-height:9px;white-space:nowrap;color:#444">Print</div>
<div class="a" style="left:651px;top:729.38px;width:60px;text-align:center;font-size:9px;line-height:9px;white-space:nowrap;color:#444">Adjust</div>
<div class="a" style="left:689px;top:729.38px;width:60px;text-align:center;font-size:9px;line-height:9px;white-space:nowrap;color:#444">Pref</div>
<svg class="a" style="left:476px;top:690px" width="34" height="34" viewBox="0 0 34 34"><defs><linearGradient id="gex" x1="0" y1="0" x2="0" y2="1"><stop offset="0" stop-color="#ffffff"/><stop offset="1" stop-color="#dcdcdc"/></linearGradient></defs><path d="M5 15L15.5 5L26 15V29.5H5Z" fill="url(#gex)" stroke="#808080" stroke-width="1"/><rect x="21" y="3" width="3.5" height="7" fill="#d8d8d8" stroke="#999" stroke-width="0.6"/><path d="M2 17L15.5 4L29 17" fill="none" stroke="#a85a10" stroke-width="4.2" stroke-linejoin="round" stroke-linecap="round"/><path d="M2 17L15.5 4L29 17" fill="none" stroke="#f29a2a" stroke-width="2.6" stroke-linejoin="round" stroke-linecap="round"/><rect x="11" y="18" width="3.5" height="8" fill="#c4cce0" stroke="#5a6a90" stroke-width="0.9"/><rect x="16" y="18" width="3.5" height="8" fill="#c4cce0" stroke="#5a6a90" stroke-width="0.9"/></svg>
<svg class="a" style="left:513px;top:690px" width="34" height="34" viewBox="0 0 34 34"><path d="M10 3H26L30 6V9H32V27L29 30H25V32H2V9H6V6H10Z" fill="#9c9c9c"/></svg>
<svg class="a" style="left:551px;top:690px" width="34" height="34" viewBox="0 0 34 34"><defs><linearGradient id="gup" x1="0" y1="0" x2="0" y2="1"><stop offset="0" stop-color="#f2c8fa"/><stop offset="1" stop-color="#c07ad8"/></linearGradient></defs><path d="M17 3L30 18H22V31H12V18H4Z" fill="url(#gup)" stroke="#8a4aa8" stroke-width="1"/></svg>
<svg class="a" style="left:589px;top:690px" width="34" height="34" viewBox="0 0 34 34"><path d="M17 31L31 16H24V3H10V16H3Z" fill="#9c9c9c"/><rect x="13" y="30" width="8" height="2" fill="#9c9c9c"/></svg>
<svg class="a" style="left:628px;top:690px" width="34" height="34" viewBox="0 0 34 34"><path d="M9 3H25L27 5V8H31L33 10V25L31 27H28V30L26 32H8L6 30V27H3L1 25V10L3 8H7V5Z" fill="#9c9c9c"/></svg>
<svg class="a" style="left:664px;top:690px" width="34" height="34" viewBox="0 0 34 34"><path d="M28.80 20.00 L28.73 21.10 L31.34 21.92 L29.92 25.82 L27.40 24.77 L26.74 25.66 L25.98 26.46 L27.45 28.76 L23.86 30.83 L22.60 28.41 L21.53 28.67 L20.43 28.79 L20.08 31.50 L15.99 30.78 L16.59 28.11 L15.60 27.62 L14.68 27.01 L12.67 28.86 L10.00 25.68 L12.17 24.02 L11.73 23.01 L11.42 21.95 L8.69 22.08 L8.69 17.92 L11.42 18.05 L11.73 16.99 L12.17 15.98 L10.00 14.32 L12.67 11.14 L14.68 12.99 L15.60 12.38 L16.59 11.89 L15.99 9.22 L20.08 8.50 L20.43 11.21 L21.53 11.33 L22.60 11.59 L23.86 9.17 L27.45 11.24 L25.98 13.54 L26.74 14.34 L27.40 15.23 L29.92 14.18 L31.34 18.08 L28.73 18.90Z" fill="#f4f4f4" stroke="#777" stroke-width="1.1"/><circle cx="20" cy="20" r="3.2" fill="#fff" stroke="#777" stroke-width="1.4"/><path d="M13.30 8.00 L13.24 8.77 L14.85 9.39 L13.55 12.10 L12.06 11.22 L11.49 11.75 L10.85 12.19 L11.37 13.83 L8.44 14.50 L8.20 12.79 L7.43 12.68 L6.69 12.45 L5.73 13.88 L3.38 12.01 L4.57 10.75 L4.18 10.08 L3.90 9.36 L2.18 9.50 L2.18 6.50 L3.90 6.64 L4.18 5.92 L4.57 5.25 L3.38 3.99 L5.73 2.12 L6.69 3.55 L7.43 3.32 L8.20 3.21 L8.44 1.50 L11.37 2.17 L10.85 3.81 L11.49 4.25 L12.06 4.78 L13.55 3.90 L14.85 6.61 L13.24 7.23Z" fill="#7aa2e8" stroke="#3a62b0" stroke-width="0.8"/><circle cx="8.5" cy="8" r="1.8" fill="#fff"/></svg>
<svg class="a" style="left:705px;top:690px" width="34" height="34" viewBox="0 0 34 34"><defs><linearGradient id="gpp" x1="0" y1="0" x2="1" y2="1"><stop offset="0" stop-color="#ffffff"/><stop offset="1" stop-color="#e2e2e2"/></linearGradient></defs><path d="M1.5 1.5H22.5V31.5H1.5Z" fill="url(#gpp)" stroke="#a8a8a8" stroke-width="1"/><path d="M23.5 32C18.5 28 16 25.5 16 22.5C16 20.5 17.5 19 19.5 19C21.3 19 22.7 20 23.5 21.5C24.3 20 25.7 19 27.5 19C29.5 19 31 20.5 31 22.5C31 25.5 28.5 28 23.5 32Z" fill="#d01414" stroke="#8a0c0c" stroke-width="0.6"/><ellipse cx="19.8" cy="21.8" rx="1.6" ry="1.1" fill="#f08080"/></svg>
<div class="a" style="left:740px;top:345px;width:816px;height:553px;background:#b2b2b2;border-top:1px solid #f4f4f4;border-left:1px solid #f4f4f4;border-right:1px solid #777;border-bottom:1px solid #777"></div>
<div class="a" style="left:747px;top:351px;width:802px;height:540px;background:#f0f0f0"></div>
<div class="a" style="left:747px;top:351px;width:802px;height:60px;background:#028a64"></div>
<div class="a" style="left:747px;top:410px;width:802px;height:1px;background:#1d6a52"></div>
<div class="a" style="left:747px;top:411px;width:802px;height:1px;background:#dcfff4"></div>
<svg class="a" style="left:761.5px;top:359.5px" width="42" height="42" viewBox="-21 -21 42 42"><defs><radialGradient id="lg" cx="0.35" cy="0.3" r="0.8"><stop offset="0" stop-color="#ffd53a"/><stop offset="0.55" stop-color="#e7a91e"/><stop offset="1" stop-color="#b07812"/></radialGradient></defs><circle r="20" fill="#0a5a40" opacity="0.5"/><circle r="19.3" fill="url(#lg)" stroke="#f6e27a" stroke-width="0.9"/><path d="M-16 7C-10 -4 0 -9 13.6 -11.3C14 -2 10 9 1 9.5C-6 10 -12 9 -16 7Z" fill="#62ad97"/><path d="M-16 7.5C-9 2.5 -2 4 4 2.5C8 1.5 10 0 11.5 -2" fill="none" stroke="#3f7a62" stroke-width="1.4"/></svg>
<div class="a" style="left:820px;top:374.07px;font-size:20px;line-height:20px;white-space:nowrap;font-weight:bold;color:#fff;letter-spacing:0.04px">Generate Recommended Purchase Orders</div>
<svg class="a" style="left:1440px;top:358px" width="9" height="11"><path d="M1.3 3.3C1.3 1.4 2.5 0.9 4.2 0.9C6 0.9 7.3 1.8 7.3 3.2C7.3 4.8 5.3 5.2 4.6 6.1V7.2" fill="none" stroke="#fff" stroke-width="2.2"/><rect x="3.3" y="8.3" width="2.7" height="2.2" fill="#fff"/></svg>
<div class="a" style="left:1465px;top:365px;width:7px;height:2px;background:#fff"></div>
<div class="a" style="left:1489px;top:358px;width:11px;height:10px;border:2px solid #fff"></div>
<svg class="a" style="left:1523px;top:357px" width="11" height="11"><path d="M1.5 1.5L9.5 9.5M9.5 1.5L1.5 9.5" stroke="#fff" stroke-width="2.3"/></svg>
<div class="a" style="left:753px;top:417px;width:788px;height:405px;border-top:1px solid #fff;border-left:1px solid #fff;border-bottom:2px solid #8a8a8a;border-right:2px solid #8a8a8a"></div>
<div class="a" style="left:797px;top:430px;width:693px;height:271px;border:1px solid #c4c4c4;box-shadow:inset 1px 1px 0 #fff,1px 1px 0 #fff"></div>
<div class="a" style="left:805px;top:424.92px;font-size:12.5px;line-height:12.5px;white-space:nowrap;background:#f0f0f0;padding:0 2px">Recommended Purchase Orders List</div>
<div class="a" style="left:814px;top:441px;width:662px;height:253px;background:#fff;border:1px solid #000"></div>
<div class="a" style="left:815px;top:442px;width:660px;height:18px;background:#b6c6b8"></div>
<div class="a" style="left:814px;top:460px;width:643px;height:1px;background:#000"></div>
<div class="a" style="left:815px;top:442px;width:25px;height:18px;border-top:1px solid #fff;border-left:1px solid #fff"></div>
<div class="a" style="left:814px;top:445.84px;width:26px;text-align:center;font-size:12px;line-height:12px;white-space:nowrap;color:#111">Gen</div>
<div class="a" style="left:841px;top:442px;width:25px;height:18px;border-top:1px solid #fff;border-left:1px solid #fff"></div>
<div class="a" style="left:840px;top:442px;width:1px;height:19px;background:#000"></div>
<div class="a" style="left:840px;top:445.84px;width:26px;text-align:center;font-size:12px;line-height:12px;white-space:nowrap;color:#111">Sep</div>
<div class="a" style="left:867px;top:442px;width:100px;height:18px;border-top:1px solid #fff;border-left:1px solid #fff"></div>
<div class="a" style="left:866px;top:442px;width:1px;height:19px;background:#000"></div>
<div class="a" style="left:866px;top:445.84px;width:101px;text-align:center;font-size:12px;line-height:12px;white-space:nowrap;color:#111">Order</div>
<div class="a" style="left:968px;top:442px;width:93px;height:18px;border-top:1px solid #fff;border-left:1px solid #fff"></div>
<div class="a" style="left:967px;top:442px;width:1px;height:19px;background:#000"></div>
<div class="a" style="left:967px;top:445.84px;width:94px;text-align:center;font-size:12px;line-height:12px;white-space:nowrap;color:#111">Supplier</div>
<div class="a" style="left:1062px;top:442px;width:172px;height:18px;border-top:1px solid #fff;border-left:1px solid #fff"></div>
<div class="a" style="left:1061px;top:442px;width:1px;height:19px;background:#000"></div>
<div class="a" style="left:1061px;top:445.84px;width:173px;text-align:center;font-size:12px;line-height:12px;white-space:nowrap;color:#111">Item</div>
<div class="a" style="left:1235px;top:442px;width:84px;height:18px;border-top:1px solid #fff;border-left:1px solid #fff"></div>
<div class="a" style="left:1234px;top:442px;width:1px;height:19px;background:#000"></div>
<div class="a" style="left:1234px;top:445.84px;width:85px;text-align:center;font-size:12px;line-height:12px;white-space:nowrap;color:#111">Needed Qty</div>
<div class="a" style="left:1320px;top:442px;width:85px;height:18px;border-top:1px solid #fff;border-left:1px solid #fff"></div>
<div class="a" style="left:1319px;top:442px;width:1px;height:19px;background:#000"></div>
<div class="a" style="left:1319px;top:445.84px;width:86px;text-align:center;font-size:12px;line-height:12px;white-space:nowrap;color:#111">Order Qty</div>
<div class="a" style="left:1406px;top:442px;width:50px;height:18px;border-top:1px solid #fff;border-left:1px solid #fff"></div>
<div class="a" style="left:1405px;top:442px;width:1px;height:19px;background:#000"></div>
<div class="a" style="left:1405px;top:445.84px;width:51px;text-align:center;font-size:12px;line-height:12px;white-space:nowrap;color:#111">U/M</div>
<div class="a" style="left:1456px;top:442px;width:1px;height:19px;background:#000"></div>
<div class="a" style="left:815px;top:478px;width:641px;height:1px;background:#a8a8a8"></div>
<div class="a" style="left:823px;top:465px;width:9px;height:9px;border:1.5px solid #111;background:#fff"></div>
<div class="a" style="left:849px;top:465px;width:9px;height:9px;border:1.5px solid #111;background:#fff"></div>
<div class="a" style="left:869px;top:463.84px;font-size:12px;line-height:12px;white-space:nowrap;color:#c8102e">P00001</div>
<div class="a" style="left:970px;top:463.84px;font-size:12px;line-height:12px;white-space:nowrap;color:#c8102e">LB01&nbsp; /MAIN</div>
<div class="a" style="left:1064px;top:463.84px;font-size:12px;line-height:12px;white-space:nowrap;color:#c8102e">MBBR03</div>
<div class="a" style="left:1234px;top:463.84px;width:85px;text-align:center;font-size:12px;line-height:12px;white-space:nowrap;color:#c8102e">135.0000</div>
<div class="a" style="left:1319px;top:463.84px;width:83px;text-align:right;font-size:12px;line-height:12px;white-space:nowrap;color:#c8102e">0.0000</div>
<div class="a" style="left:1408px;top:463.84px;font-size:12px;line-height:12px;white-space:nowrap;color:#c8102e">EACH</div>
<div class="a" style="left:815px;top:496px;width:641px;height:1px;background:#a8a8a8"></div>
<div class="a" style="left:823px;top:483px;width:9px;height:9px;border:1.5px solid #111;background:#fff"></div>
<div class="a" style="left:849px;top:483px;width:9px;height:9px;border:1.5px solid #111;background:#fff"></div>
<div class="a" style="left:869px;top:481.84px;font-size:12px;line-height:12px;white-space:nowrap;color:#c8102e">P00002</div>
<div class="a" style="left:970px;top:481.84px;font-size:12px;line-height:12px;white-space:nowrap;color:#c8102e">AB01&nbsp; /MAIN</div>
<div class="a" style="left:1064px;top:481.84px;font-size:12px;line-height:12px;white-space:nowrap;color:#c8102e">MBBR04</div>
<div class="a" style="left:1234px;top:481.84px;width:85px;text-align:center;font-size:12px;line-height:12px;white-space:nowrap;color:#c8102e">144.0000</div>
<div class="a" style="left:1319px;top:481.84px;width:83px;text-align:right;font-size:12px;line-height:12px;white-space:nowrap;color:#c8102e">0.0000</div>
<div class="a" style="left:1408px;top:481.84px;font-size:12px;line-height:12px;white-space:nowrap;color:#c8102e">EACH</div>
<div class="a" style="left:815px;top:514px;width:641px;height:1px;background:#a8a8a8"></div>
<div class="a" style="left:823px;top:501px;width:9px;height:9px;border:1.5px solid #111;background:#fff"></div>
<div class="a" style="left:849px;top:501px;width:9px;height:9px;border:1.5px solid #111;background:#fff"></div>
<div class="a" style="left:869px;top:499.84px;font-size:12px;line-height:12px;white-space:nowrap;color:#c8102e">P00003</div>
<div class="a" style="left:970px;top:499.84px;font-size:12px;line-height:12px;white-space:nowrap;color:#c8102e">AB01&nbsp; /MAIN</div>
<div class="a" style="left:1064px;top:499.84px;font-size:12px;line-height:12px;white-space:nowrap;color:#c8102e">MBBR09</div>
<div class="a" style="left:1234px;top:499.84px;width:85px;text-align:center;font-size:12px;line-height:12px;white-space:nowrap;color:#c8102e">129.0000</div>
<div class="a" style="left:1319px;top:499.84px;width:83px;text-align:right;font-size:12px;line-height:12px;white-space:nowrap;color:#c8102e">0.0000</div>
<div class="a" style="left:1408px;top:499.84px;font-size:12px;line-height:12px;white-space:nowrap;color:#c8102e">EACH</div>
<div class="a" style="left:815px;top:532px;width:641px;height:1px;background:#a8a8a8"></div>
<div class="a" style="left:823px;top:519px;width:9px;height:9px;border:1.5px solid #111;background:#fff"></div>
<div class="a" style="left:849px;top:519px;width:9px;height:9px;border:1.5px solid #111;background:#fff"></div>
<div class="a" style="left:869px;top:517.84px;font-size:12px;line-height:12px;white-space:nowrap;color:#c8102e">P00004</div>
<div class="a" style="left:970px;top:517.84px;font-size:12px;line-height:12px;white-space:nowrap;color:#c8102e">JS01&nbsp; /MAIN</div>
<div class="a" style="left:1064px;top:517.84px;font-size:12px;line-height:12px;white-space:nowrap;color:#c8102e">MBDA04</div>
<div class="a" style="left:1234px;top:517.84px;width:85px;text-align:center;font-size:12px;line-height:12px;white-space:nowrap;color:#c8102e">12.0000</div>
<div class="a" style="left:1319px;top:517.84px;width:83px;text-align:right;font-size:12px;line-height:12px;white-space:nowrap;color:#c8102e">0.0000</div>
<div class="a" style="left:1408px;top:517.84px;font-size:12px;line-height:12px;white-space:nowrap;color:#c8102e">EACH</div>
<div class="a" style="left:815px;top:550px;width:641px;height:1px;background:#a8a8a8"></div>
<div class="a" style="left:823px;top:537px;width:9px;height:9px;border:1.5px solid #111;background:#fff"></div>
<div class="a" style="left:849px;top:537px;width:9px;height:9px;border:1.5px solid #111;background:#fff"></div>
<div class="a" style="left:869px;top:535.84px;font-size:12px;line-height:12px;white-space:nowrap;color:#c8102e">P00005</div>
<div class="a" style="left:970px;top:535.84px;font-size:12px;line-height:12px;white-space:nowrap;color:#c8102e">JS01&nbsp; /MAIN</div>
<div class="a" style="left:1064px;top:535.84px;font-size:12px;line-height:12px;white-space:nowrap;color:#c8102e">MBDA05</div>
<div class="a" style="left:1234px;top:535.84px;width:85px;text-align:center;font-size:12px;line-height:12px;white-space:nowrap;color:#c8102e">18.0000</div>
<div class="a" style="left:1319px;top:535.84px;width:83px;text-align:right;font-size:12px;line-height:12px;white-space:nowrap;color:#c8102e">0.0000</div>
<div class="a" style="left:1408px;top:535.84px;font-size:12px;line-height:12px;white-space:nowrap;color:#c8102e">EACH</div>
<div class="a" style="left:815px;top:568px;width:641px;height:1px;background:#a8a8a8"></div>
<div class="a" style="left:823px;top:555px;width:9px;height:9px;border:1.5px solid #111;background:#fff"></div>
<div class="a" style="left:849px;top:555px;width:9px;height:9px;border:1.5px solid #111;background:#fff"></div>
<div class="a" style="left:869px;top:553.84px;font-size:12px;line-height:12px;white-space:nowrap;color:#c8102e">P00006</div>
<div class="a" style="left:970px;top:553.84px;font-size:12px;line-height:12px;white-space:nowrap;color:#c8102e">AB01&nbsp; /MAIN</div>
<div class="a" style="left:1064px;top:553.84px;font-size:12px;line-height:12px;white-space:nowrap;color:#c8102e">MBHB01</div>
<div class="a" style="left:1234px;top:553.84px;width:85px;text-align:center;font-size:12px;line-height:12px;white-space:nowrap;color:#c8102e">320.0000</div>
<div class="a" style="left:1319px;top:553.84px;width:83px;text-align:right;font-size:12px;line-height:12px;white-space:nowrap;color:#c8102e">0.0000</div>
<div class="a" style="left:1408px;top:553.84px;font-size:12px;line-height:12px;white-space:nowrap;color:#c8102e">EACH</div>
<div class="a" style="left:815px;top:586px;width:641px;height:1px;background:#a8a8a8"></div>
<div class="a" style="left:823px;top:573px;width:9px;height:9px;border:1.5px solid #111;background:#fff"></div>
<div class="a" style="left:849px;top:573px;width:9px;height:9px;border:1.5px solid #111;background:#fff"></div>
<div class="a" style="left:869px;top:571.84px;font-size:12px;line-height:12px;white-space:nowrap;color:#c8102e">P00007</div>
<div class="a" style="left:970px;top:571.84px;font-size:12px;line-height:12px;white-space:nowrap;color:#c8102e">AB01&nbsp; /MAIN</div>
<div class="a" style="left:1064px;top:571.84px;font-size:12px;line-height:12px;white-space:nowrap;color:#c8102e">MBLT01</div>
<div class="a" style="left:1234px;top:571.84px;width:85px;text-align:center;font-size:12px;line-height:12px;white-space:nowrap;color:#c8102e">10.0000</div>
<div class="a" style="left:1319px;top:571.84px;width:83px;text-align:right;font-size:12px;line-height:12px;white-space:nowrap;color:#c8102e">0.0000</div>
<div class="a" style="left:1408px;top:571.84px;font-size:12px;line-height:12px;white-space:nowrap;color:#c8102e">EACH</div>
<div class="a" style="left:815px;top:604px;width:641px;height:1px;background:#a8a8a8"></div>
<div class="a" style="left:823px;top:591px;width:9px;height:9px;border:1.5px solid #111;background:#fff"></div>
<div class="a" style="left:849px;top:591px;width:9px;height:9px;border:1.5px solid #111;background:#fff"></div>
<div class="a" style="left:869px;top:589.84px;font-size:12px;line-height:12px;white-space:nowrap;color:#c8102e">P00008</div>
<div class="a" style="left:970px;top:589.84px;font-size:12px;line-height:12px;white-space:nowrap;color:#c8102e">AB01&nbsp; /MAIN</div>
<div class="a" style="left:1064px;top:589.84px;font-size:12px;line-height:12px;white-space:nowrap;color:#c8102e">MBLT02</div>
<div class="a" style="left:1234px;top:589.84px;width:85px;text-align:center;font-size:12px;line-height:12px;white-space:nowrap;color:#c8102e">2.0000</div>
<div class="a" style="left:1319px;top:589.84px;width:83px;text-align:right;font-size:12px;line-height:12px;white-space:nowrap;color:#c8102e">0.0000</div>
<div class="a" style="left:1408px;top:589.84px;font-size:12px;line-height:12px;white-space:nowrap;color:#c8102e">EACH</div>
<div class="a" style="left:815px;top:622px;width:641px;height:1px;background:#a8a8a8"></div>
<div class="a" style="left:823px;top:609px;width:9px;height:9px;border:1.5px solid #111;background:#fff"></div>
<div class="a" style="left:849px;top:609px;width:9px;height:9px;border:1.5px solid #111;background:#fff"></div>
<div class="a" style="left:869px;top:607.84px;font-size:12px;line-height:12px;white-space:nowrap;color:#c8102e">P00009</div>
<div class="a" style="left:970px;top:607.84px;font-size:12px;line-height:12px;white-space:nowrap;color:#c8102e">CC01&nbsp; /MAIN</div>
<div class="a" style="left:1064px;top:607.84px;font-size:12px;line-height:12px;white-space:nowrap;color:#c8102e">MBPT01</div>
<div class="a" style="left:1234px;top:607.84px;width:85px;text-align:center;font-size:12px;line-height:12px;white-space:nowrap;color:#c8102e">1.0000</div>
<div class="a" style="left:1319px;top:607.84px;width:83px;text-align:right;font-size:12px;line-height:12px;white-space:nowrap;color:#c8102e">0.0000</div>
<div class="a" style="left:1408px;top:607.84px;font-size:12px;line-height:12px;white-space:nowrap;color:#c8102e">GAL</div>
<div class="a" style="left:815px;top:640px;width:641px;height:1px;background:#a8a8a8"></div>
<div class="a" style="left:823px;top:627px;width:9px;height:9px;border:1.5px solid #111;background:#fff"></div>
<div class="a" style="left:849px;top:627px;width:9px;height:9px;border:1.5px solid #111;background:#fff"></div>
<div class="a" style="left:869px;top:625.84px;font-size:12px;line-height:12px;white-space:nowrap;color:#c8102e">P00010</div>
<div class="a" style="left:970px;top:625.84px;font-size:12px;line-height:12px;white-space:nowrap;color:#c8102e">AB01&nbsp; /MAIN</div>
<div class="a" style="left:1064px;top:625.84px;font-size:12px;line-height:12px;white-space:nowrap;color:#c8102e">MBSA01</div>
<div class="a" style="left:1234px;top:625.84px;width:85px;text-align:center;font-size:12px;line-height:12px;white-space:nowrap;color:#c8102e">150.0000</div>
<div class="a" style="left:1319px;top:625.84px;width:83px;text-align:right;font-size:12px;line-height:12px;white-space:nowrap;color:#c8102e">0.0000</div>
<div class="a" style="left:1408px;top:625.84px;font-size:12px;line-height:12px;white-space:nowrap;color:#c8102e">EACH</div>
<div class="a" style="left:815px;top:658px;width:641px;height:1px;background:#a8a8a8"></div>
<div class="a" style="left:823px;top:645px;width:9px;height:9px;border:1.5px solid #111;background:#fff"></div>
<div class="a" style="left:849px;top:645px;width:9px;height:9px;border:1.5px solid #111;background:#fff"></div>
<div class="a" style="left:869px;top:643.84px;font-size:12px;line-height:12px;white-space:nowrap;color:#c8102e">P00011</div>
<div class="a" style="left:970px;top:643.84px;font-size:12px;line-height:12px;white-space:nowrap;color:#c8102e">AB01&nbsp; /MAIN</div>
<div class="a" style="left:1064px;top:643.84px;font-size:12px;line-height:12px;white-space:nowrap;color:#c8102e">MBSA02</div>
<div class="a" style="left:1234px;top:643.84px;width:85px;text-align:center;font-size:12px;line-height:12px;white-space:nowrap;color:#c8102e">4.0000</div>
<div class="a" style="left:1319px;top:643.84px;width:83px;text-align:right;font-size:12px;line-height:12px;white-space:nowrap;color:#c8102e">0.0000</div>
<div class="a" style="left:1408px;top:643.84px;font-size:12px;line-height:12px;white-space:nowrap;color:#c8102e">EACH</div>
<div class="a" style="left:815px;top:676px;width:641px;height:1px;background:#a8a8a8"></div>
<div class="a" style="left:823px;top:663px;width:9px;height:9px;border:1.5px solid #111;background:#fff"></div>
<div class="a" style="left:849px;top:663px;width:9px;height:9px;border:1.5px solid #111;background:#fff"></div>
<div class="a" style="left:869px;top:661.84px;font-size:12px;line-height:12px;white-space:nowrap;color:#c8102e">P00012</div>
<div class="a" style="left:970px;top:661.84px;font-size:12px;line-height:12px;white-space:nowrap;color:#c8102e">AB01&nbsp; /MAIN</div>
<div class="a" style="left:1064px;top:661.84px;font-size:12px;line-height:12px;white-space:nowrap;color:#c8102e">MBSA03</div>
<div class="a" style="left:1234px;top:661.84px;width:85px;text-align:center;font-size:12px;line-height:12px;white-space:nowrap;color:#c8102e">13.0000</div>
<div class="a" style="left:1319px;top:661.84px;width:83px;text-align:right;font-size:12px;line-height:12px;white-space:nowrap;color:#c8102e">0.0000</div>
<div class="a" style="left:1408px;top:661.84px;font-size:12px;line-height:12px;white-space:nowrap;color:#c8102e">EACH</div>
<div class="a" style="left:840px;top:461px;width:1px;height:216px;background:#a8a8a8"></div>
<div class="a" style="left:866px;top:461px;width:1px;height:216px;background:#a8a8a8"></div>
<div class="a" style="left:967px;top:461px;width:1px;height:216px;background:#a8a8a8"></div>
<div class="a" style="left:1061px;top:461px;width:1px;height:216px;background:#a8a8a8"></div>
<div class="a" style="left:1234px;top:461px;width:1px;height:216px;background:#a8a8a8"></div>
<div class="a" style="left:1319px;top:461px;width:1px;height:216px;background:#a8a8a8"></div>
<div class="a" style="left:1405px;top:461px;width:1px;height:216px;background:#a8a8a8"></div>
<div class="a" style="left:1457px;top:460px;width:17px;height:216px;background:repeating-conic-gradient(#e4e4e4 0 25%,#fbfbfb 0 50%) 0 0/2px 2px"></div>
<div class="a" style="left:1457px;top:442px;width:16px;height:17px;background:#f0f0f0;border:1px solid #fff;border-right-color:#8a8a8a;border-bottom-color:#8a8a8a;box-shadow:1px 1px 0 #555"></div>
<div class="a" style="left:1461px;top:448.5px;width:0;height:0;border-left:4px solid transparent;border-right:4px solid transparent;border-bottom:4px solid #000"></div>
<div class="a" style="left:1457px;top:460px;width:16px;height:124px;background:#f0f0f0;border:1px solid #fff;border-right-color:#8a8a8a;border-bottom-color:#8a8a8a;box-shadow:1px 1px 0 #555"></div>
<div class="a" style="left:1457px;top:659px;width:16px;height:17px;background:#f0f0f0;border:1px solid #fff;border-right-color:#8a8a8a;border-bottom-color:#8a8a8a;box-shadow:1px 1px 0 #555"></div>
<div class="a" style="left:1461px;top:666.0px;width:0;height:0;border-left:4px solid transparent;border-right:4px solid transparent;border-top:4px solid #000"></div>
<div class="a" style="left:1457px;top:677px;width:17px;height:16px;background:#fff"></div>
<div class="a" style="left:815px;top:676px;width:4px;height:17px;background:#000"></div>
<div class="a" style="left:819px;top:677px;width:638px;height:16px;background:repeating-conic-gradient(#e4e4e4 0 25%,#fbfbfb 0 50%) 0 0/2px 2px"></div>
<div class="a" style="left:819px;top:677px;width:17px;height:16px;background:#f0f0f0;border:1px solid #fff;border-right-color:#8a8a8a;border-bottom-color:#8a8a8a;box-shadow:1px 1px 0 #555"></div>
<div class="a" style="left:825.0px;top:681px;width:0;height:0;border-top:4px solid transparent;border-bottom:4px solid transparent;border-right:4px solid #000"></div>
<div class="a" style="left:837px;top:677px;width:86px;height:16px;background:#f0f0f0;border:1px solid #fff;border-right-color:#8a8a8a;border-bottom-color:#8a8a8a;box-shadow:1px 1px 0 #555"></div>
<div class="a" style="left:1441px;top:677px;width:16px;height:16px;background:#f0f0f0;border:1px solid #fff;border-right-color:#8a8a8a;border-bottom-color:#8a8a8a;box-shadow:1px 1px 0 #555"></div>
<div class="a" style="left:1447.5px;top:681px;width:0;height:0;border-top:4px solid transparent;border-bottom:4px solid transparent;border-left:4px solid #000"></div>
<div class="a" style="left:815px;top:692px;width:660px;height:2px;background:#000"></div>
<div class="a" style="right:1061px;top:722.42px;font-size:12.5px;line-height:12.5px;white-space:nowrap;">Filter</div>
<div class="a" style="left:866px;top:716px;width:167px;height:24px;background:#fff;border:1px solid #6e6e6e"></div>
<div class="a" style="left:1013px;top:718px;width:18px;height:20px;background:#f2f2f2;border:1px solid #b4b4b4"></div>
<div class="a" style="left:1018.0px;top:726.0px;width:0;height:0;border-left:4px solid transparent;border-right:4px solid transparent;border-top:4px solid #000"></div>
<div class="a" style="left:870px;top:721.72px;font-size:12.5px;line-height:12.5px;white-space:nowrap;">None</div>
<div class="a" style="right:836px;top:722.42px;font-size:12.5px;line-height:12.5px;white-space:nowrap;">P/M</div>
<div class="a" style="left:1085px;top:716px;width:158px;height:24px;background:#fff;border:1px solid #6e6e6e"></div>
<div class="a" style="left:1223px;top:718px;width:18px;height:20px;background:#f2f2f2;border:1px solid #b4b4b4"></div>
<div class="a" style="left:1228.0px;top:726.0px;width:0;height:0;border-left:4px solid transparent;border-right:4px solid transparent;border-top:4px solid #000"></div>
<div class="a" style="left:1089px;top:721.72px;font-size:12.5px;line-height:12.5px;white-space:nowrap;">Purchase Only</div>
<div class="a" style="left:1085px;top:748px;width:12px;height:12px;border:2px solid #6a6a6a;background:#fff"></div>
<div class="a" style="left:1101px;top:748.67px;font-size:12.2px;line-height:12.2px;white-space:nowrap;">Exclude Non-Stock Items</div>
<div class="a" style="left:1085px;top:766px;width:12px;height:12px;border:2px solid #6a6a6a;background:#fff"></div>
<div class="a" style="left:1101px;top:766.67px;font-size:12.2px;line-height:12.2px;white-space:nowrap;">Use Order Minimum/Increment</div>
<div class="a" style="left:1085px;top:784px;width:12px;height:12px;border:2px solid #6a6a6a;background:#fff"></div>
<div class="a" style="left:1101px;top:784.67px;font-size:12.2px;line-height:12.2px;white-space:nowrap;">Show Blankets Only</div>
<div class="a" style="left:1085px;top:802px;width:12px;height:12px;border:2px solid #6a6a6a;background:#fff"></div>
<div class="a" style="left:1101px;top:802.67px;font-size:12.2px;line-height:12.2px;white-space:nowrap;">Combine Dates</div>
<div class="a" style="right:1061px;top:796.42px;font-size:12.5px;line-height:12.5px;white-space:nowrap;">Tagged</div>
<div class="a" style="left:866px;top:790px;width:72px;height:24px;background:#f0f0f0;border:1px solid #7a7a7a"></div>
<div class="a" style="left:866px;top:795.72px;width:66px;text-align:right;font-size:12.5px;line-height:12.5px;white-space:nowrap;">0</div>
<div class="a" style="left:943.5px;top:796.42px;font-size:12.5px;line-height:12.5px;white-space:nowrap;">of</div>
<div class="a" style="left:960px;top:790px;width:72px;height:24px;background:#f0f0f0;border:1px solid #7a7a7a"></div>
<div class="a" style="left:960px;top:795.72px;width:66px;text-align:right;font-size:12.5px;line-height:12.5px;white-space:nowrap;">19</div>
<div class="a" style="left:1298px;top:713px;width:192px;height:28px;border:1px solid #7a7a7a"></div>
<div class="a" style="left:1307px;top:706px;font-size:12.2px;line-height:14px;background:#f0f0f0;padding:0 2px;white-space:nowrap">New Order Status</div>
<svg class="a" style="left:1310px;top:723px" width="12" height="12"><circle cx="6" cy="6" r="4.3" fill="#fff" stroke="#333" stroke-width="1.2"/></svg>
<div class="a" style="left:1326px;top:723.67px;font-size:12.2px;line-height:12.2px;white-space:nowrap;">Accepted</div>
<svg class="a" style="left:1403px;top:723px" width="12" height="12"><circle cx="6" cy="6" r="4.3" fill="#fff" stroke="#333" stroke-width="1.2"/><circle cx="6" cy="6" r="2" fill="#111"/></svg>
<div class="a" style="left:1419px;top:723.67px;font-size:12.2px;line-height:12.2px;white-space:nowrap;">Pending</div>
<div class="a" style="left:1298px;top:757px;width:192px;height:28px;border:1px solid #7a7a7a"></div>
<div class="a" style="left:1307px;top:750px;font-size:12.2px;line-height:14px;background:#f0f0f0;padding:0 2px;white-space:nowrap">New Order Type</div>
<svg class="a" style="left:1310px;top:767px" width="12" height="12"><circle cx="6" cy="6" r="4.3" fill="#fff" stroke="#333" stroke-width="1.2"/><circle cx="6" cy="6" r="2" fill="#111"/></svg>
<div class="a" style="left:1326.5px;top:767.67px;font-size:12.2px;line-height:12.2px;white-space:nowrap;">Purchase Order</div>
<svg class="a" style="left:1422px;top:767px" width="12" height="12"><circle cx="6" cy="6" r="4.3" fill="#fff" stroke="#333" stroke-width="1.2"/></svg>
<div class="a" style="left:1438.5px;top:767.67px;font-size:12.2px;line-height:12.2px;white-space:nowrap;">Quote</div>
<div class="a" style="right:506px;top:796.59px;font-size:12.3px;line-height:12.3px;white-space:nowrap;">Purchase Orders Generated</div>
<div class="a" style="left:1417px;top:790px;width:72px;height:24px;background:#f0f0f0;border:1px solid #7a7a7a"></div>
<div class="a" style="left:1417px;top:795.72px;width:66px;text-align:right;font-size:12.5px;line-height:12.5px;white-space:nowrap;">0</div>
<div class="a" style="left:759px;top:831px;width:38px;height:38px;border:1px solid #fff;border-right-color:#a0a0a0;border-bottom-color:#a0a0a0"></div>
<div class="a" style="left:747px;top:872.38px;width:60px;text-align:center;font-size:9px;line-height:9px;white-space:nowrap;color:#444">Exit</div>
<div class="a" style="left:786px;top:872.38px;width:60px;text-align:center;font-size:9px;line-height:9px;white-space:nowrap;color:#444">Generate</div>
<div class="a" style="left:823px;top:872.38px;width:60px;text-align:center;font-size:9px;line-height:9px;white-space:nowrap;color:#444">All</div>
<div class="a" style="left:861px;top:872.38px;width:60px;text-align:center;font-size:9px;line-height:9px;white-space:nowrap;color:#444">None</div>
<div class="a" style="left:899px;top:872.38px;width:60px;text-align:center;font-size:9px;line-height:9px;white-space:nowrap;color:#444">Print</div>
<div class="a" style="left:936.5px;top:872.38px;width:60px;text-align:center;font-size:9px;line-height:9px;white-space:nowrap;color:#444">Pref</div>
<svg class="a" style="left:762px;top:833px" width="34" height="34" viewBox="0 0 34 34"><defs><linearGradient id="gex" x1="0" y1="0" x2="0" y2="1"><stop offset="0" stop-color="#ffffff"/><stop offset="1" stop-color="#dcdcdc"/></linearGradient></defs><path d="M5 15L15.5 5L26 15V29.5H5Z" fill="url(#gex)" stroke="#808080" stroke-width="1"/><rect x="21" y="3" width="3.5" height="7" fill="#d8d8d8" stroke="#999" stroke-width="0.6"/><path d="M2 17L15.5 4L29 17" fill="none" stroke="#a85a10" stroke-width="4.2" stroke-linejoin="round" stroke-linecap="round"/><path d="M2 17L15.5 4L29 17" fill="none" stroke="#f29a2a" stroke-width="2.6" stroke-linejoin="round" stroke-linecap="round"/><rect x="11" y="18" width="3.5" height="8" fill="#c4cce0" stroke="#5a6a90" stroke-width="0.9"/><rect x="16" y="18" width="3.5" height="8" fill="#c4cce0" stroke="#5a6a90" stroke-width="0.9"/></svg>
<svg class="a" style="left:800px;top:832px" width="34" height="34" viewBox="0 0 34 34"><path d="M10 3H26L30 6V9H32V27L29 30H25V32H2V9H6V6H10Z" fill="#9c9c9c"/></svg>
<svg class="a" style="left:837px;top:833px" width="34" height="34" viewBox="0 0 34 34"><defs><linearGradient id="gup" x1="0" y1="0" x2="0" y2="1"><stop offset="0" stop-color="#f2c8fa"/><stop offset="1" stop-color="#c07ad8"/></linearGradient></defs><path d="M17 3L30 18H22V31H12V18H4Z" fill="url(#gup)" stroke="#8a4aa8" stroke-width="1"/></svg>
<svg class="a" style="left:875px;top:832px" width="34" height="34" viewBox="0 0 34 34"><path d="M17 31L31 16H24V3H10V16H3Z" fill="#9c9c9c"/><rect x="13" y="30" width="8" height="2" fill="#9c9c9c"/></svg>
<svg class="a" style="left:913px;top:832px" width="34" height="34" viewBox="0 0 34 34"><path d="M9 3H25L27 5V8H31L33 10V25L31 27H28V30L26 32H8L6 30V27H3L1 25V10L3 8H7V5Z" fill="#9c9c9c"/></svg>
<svg class="a" style="left:953px;top:834px" width="34" height="34" viewBox="0 0 34 34"><defs><linearGradient id="gpp" x1="0" y1="0" x2="1" y2="1"><stop offset="0" stop-color="#ffffff"/><stop offset="1" stop-color="#e2e2e2"/></linearGradient></defs><path d="M1.5 1.5H22.5V31.5H1.5Z" fill="url(#gpp)" stroke="#a8a8a8" stroke-width="1"/><path d="M23.5 32C18.5 28 16 25.5 16 22.5C16 20.5 17.5 19 19.5 19C21.3 19 22.7 20 23.5 21.5C24.3 20 25.7 19 27.5 19C29.5 19 31 20.5 31 22.5C31 25.5 28.5 28 23.5 32Z" fill="#d01414" stroke="#8a0c0c" stroke-width="0.6"/><ellipse cx="19.8" cy="21.8" rx="1.6" ry="1.1" fill="#f08080"/></svg>
</body></html>
